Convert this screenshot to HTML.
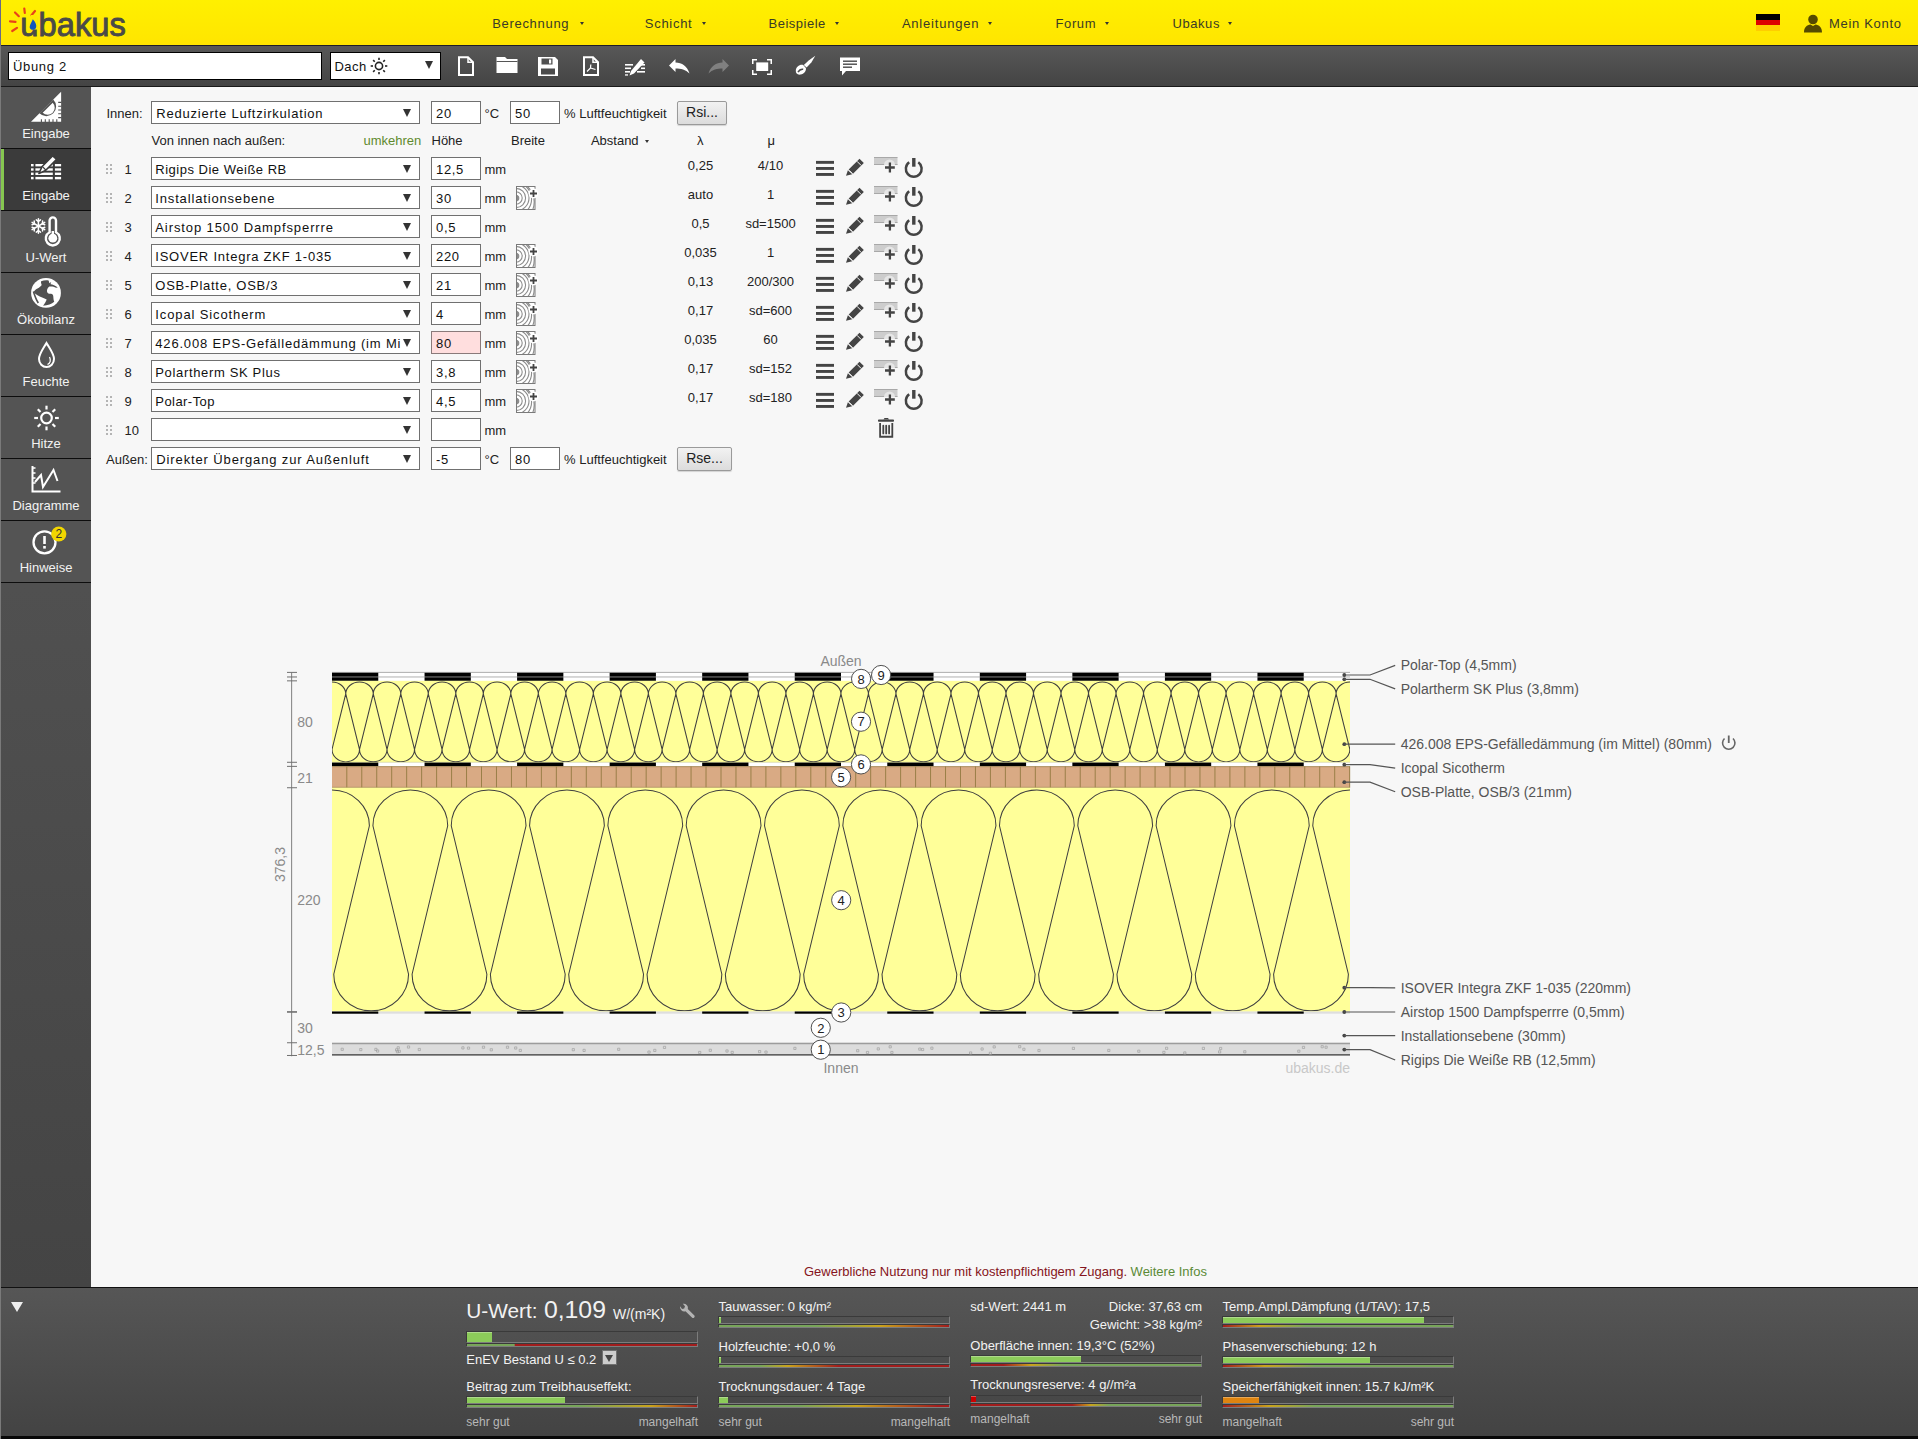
<!DOCTYPE html>
<html><head><meta charset="utf-8"><title>ubakus</title>
<style>
html,body{margin:0;padding:0}
body{width:1918px;height:1439px;overflow:hidden;position:relative;background:#f7f7f7;font-family:"Liberation Sans", sans-serif;color:#222}
.a{position:absolute}
.t{position:absolute;white-space:pre;line-height:1}
.v{letter-spacing:0.65px}
.sel{position:absolute;box-sizing:border-box;height:23px;border:1px solid #707070;background:#fff}
.inp{position:absolute;box-sizing:border-box;height:23px;border:1px solid #707070;background:#fff}
.arr{position:absolute;width:0;height:0;border-left:4px solid transparent;border-right:4px solid transparent;border-top:8px solid #333}
</style></head><body>

<div class="a" style="left:0;top:0;width:1918px;height:45px;background:linear-gradient(#fff000,#ffe500)"></div>
<div class="a" style="left:0;top:45px;width:1918px;height:1px;background:#1d1d28"></div>
<svg class="a" style="left:0;top:0" width="140" height="45" viewBox="0 0 140 45">
<g stroke="#e8421a" stroke-width="2.2" stroke-linecap="round">
<line x1="24.3" y1="8.5" x2="24.8" y2="13"/>
<line x1="15" y1="12.5" x2="18.8" y2="16.2"/>
<line x1="10" y1="21.4" x2="15.5" y2="21.8"/>
<line x1="12.2" y1="31" x2="17" y2="27.8"/>
<line x1="35" y1="11" x2="31.5" y2="15.3"/>
</g>
<text x="20.3" y="35.8" font-family="Liberation Sans" font-size="33.5" fill="#4a4a48" stroke="#4a4a48" stroke-width="0.9" textLength="105.5" lengthAdjust="spacingAndGlyphs">ubakus</text>
<rect x="30.8" y="15" width="6.5" height="14.5" fill="#ffe800"/>
<path d="M32.8 19.2 C35.8 22.5 36.8 25 36.1 27.5 C35.3 30.2 31.3 30.6 30 28.3 C29 26 31.2 23 32.8 19.2Z" fill="#1155bb"/>
</svg>
<div class="t" style="left:492.2px;top:17px;font-size:13px;color:#3a3a26;letter-spacing:0.695px">Berechnung</div>
<div class="a" style="left:579.8px;top:22px;width:0;height:0;border-left:2.5px solid transparent;border-right:2.5px solid transparent;border-top:3px solid #333"></div>
<div class="t" style="left:644.8px;top:17px;font-size:13px;color:#3a3a26;letter-spacing:0.710px">Schicht</div>
<div class="a" style="left:702px;top:22px;width:0;height:0;border-left:2.5px solid transparent;border-right:2.5px solid transparent;border-top:3px solid #333"></div>
<div class="t" style="left:768.6px;top:17px;font-size:13px;color:#3a3a26;letter-spacing:0.490px">Beispiele</div>
<div class="a" style="left:834.6px;top:22px;width:0;height:0;border-left:2.5px solid transparent;border-right:2.5px solid transparent;border-top:3px solid #333"></div>
<div class="t" style="left:901.9px;top:17px;font-size:13px;color:#3a3a26;letter-spacing:0.790px">Anleitungen</div>
<div class="a" style="left:987.5px;top:22px;width:0;height:0;border-left:2.5px solid transparent;border-right:2.5px solid transparent;border-top:3px solid #333"></div>
<div class="t" style="left:1055.5px;top:17px;font-size:13px;color:#3a3a26;letter-spacing:0.609px">Forum</div>
<div class="a" style="left:1104.5px;top:22px;width:0;height:0;border-left:2.5px solid transparent;border-right:2.5px solid transparent;border-top:3px solid #333"></div>
<div class="t" style="left:1172.5px;top:17px;font-size:13px;color:#3a3a26;letter-spacing:0.561px">Ubakus</div>
<div class="a" style="left:1228.4px;top:22px;width:0;height:0;border-left:2.5px solid transparent;border-right:2.5px solid transparent;border-top:3px solid #333"></div>
<div class="a" style="left:1756px;top:14px;width:24px;height:5.5px;background:#000"></div>
<div class="a" style="left:1756px;top:19.5px;width:24px;height:5.5px;background:#dd0000"></div>
<div class="a" style="left:1756px;top:25px;width:24px;height:5.5px;background:#ffce00"></div>
<svg class="a" style="left:1803px;top:14px" width="20" height="19" viewBox="0 0 20 19"><circle cx="10" cy="5.5" r="4.8" fill="#554a00"/><path d="M1 18.5 C1 13 4 11 7.5 10.5 L10 12 L12.5 10.5 C16 11 19 13 19 18.5Z" fill="#554a00"/></svg>
<div class="t" style="left:1829px;top:17px;font-size:13px;color:#3a3a26;letter-spacing:0.691px">Mein Konto</div>
<div class="a" style="left:0;top:46px;width:1918px;height:40px;background:linear-gradient(#585858,#444)"></div>
<div class="a" style="left:0;top:86px;width:1918px;height:1px;background:#1a1a1a"></div>
<div class="a" style="left:8px;top:52px;width:314px;height:28px;box-sizing:border-box;border:1px solid #000;background:#fff"></div>
<div class="t" style="left:13px;top:60px;font-size:13px;color:#111;letter-spacing:0.67px">Übung 2</div>
<div class="a" style="left:330px;top:52px;width:111px;height:28px;box-sizing:border-box;border:1px solid #000;background:#fff"></div>
<div class="t" style="left:334.5px;top:60px;font-size:13px;color:#111;letter-spacing:0.47px">Dach</div>
<div class="arr" style="left:425px;top:61px"></div>
<svg class="a" style="left:370px;top:57px" width="18" height="18" viewBox="0 0 18 18"><circle cx="9" cy="9" r="3.6" fill="none" stroke="#222" stroke-width="1.6"/><line x1="15.00" y1="9.00" x2="17.30" y2="9.00" stroke="#222" stroke-width="1.6"/><line x1="13.24" y1="13.24" x2="14.87" y2="14.87" stroke="#222" stroke-width="1.6"/><line x1="9.00" y1="15.00" x2="9.00" y2="17.30" stroke="#222" stroke-width="1.6"/><line x1="4.76" y1="13.24" x2="3.13" y2="14.87" stroke="#222" stroke-width="1.6"/><line x1="3.00" y1="9.00" x2="0.70" y2="9.00" stroke="#222" stroke-width="1.6"/><line x1="4.76" y1="4.76" x2="3.13" y2="3.13" stroke="#222" stroke-width="1.6"/><line x1="9.00" y1="3.00" x2="9.00" y2="0.70" stroke="#222" stroke-width="1.6"/><line x1="13.24" y1="4.76" x2="14.87" y2="3.13" stroke="#222" stroke-width="1.6"/></svg>
<svg class="a" style="left:0;top:46px" width="880" height="40" viewBox="0 46 880 40">
<g fill="none" stroke="#fff" stroke-width="2">
<path d="M459 57.2 H468 L473 62.2 V75 H459 Z"/>
<path d="M468 57.2 V62.2 H473" stroke-width="1.5"/>
</g>
<path d="M496.5 57 H505 L507 59 H517.5 V73 H496.5 Z" fill="#fff"/>
<path d="M496.5 61.5 H517.5" stroke="#555" stroke-width="1"/>
<path d="M538 57 H555 L558 60 V76 H538 Z" fill="#fff"/>
<rect x="541.5" y="58.5" width="11" height="6" fill="#505050"/>
<rect x="549" y="59.5" width="2.2" height="4" fill="#fff"/>
<rect x="541" y="68.5" width="14" height="6" fill="#4a4a4a"/>
<g fill="none" stroke="#fff" stroke-width="2">
<path d="M584 57.2 H593 L598 62.2 V75 H584 Z"/>
<path d="M593 57.2 V62.2 H598" stroke-width="1.5"/>
</g>
<path d="M587 71.5 L590.5 68 L590.8 64.5 M590.5 68 L595.5 69.5" stroke="#fff" stroke-width="1.2" fill="none"/>
<g fill="#fff">
<rect x="625" y="64" width="8" height="1.6"/><rect x="625" y="67.5" width="6" height="1.6"/><rect x="625" y="71" width="5" height="1.6"/><rect x="625" y="74.3" width="3" height="1.3"/>
<rect x="639" y="64" width="6" height="1.6"/><rect x="641" y="67.5" width="4" height="1.6"/><rect x="637" y="71" width="8" height="1.6"/>
<path d="M641 59 L644.5 62.5 L634 73.5 L629.5 75.5 L631 71 Z"/>
<path d="M669 65.5 L675.5 59 L675.5 62.5 C682 62.5 687 66 689.5 73.5 C685.5 69.5 681 68.5 675.5 68.5 L675.5 72 Z"/>
<path d="M729 65.5 L722.5 59 L722.5 62.5 C716 62.5 711 66 708.5 73.5 C712.5 69.5 717 68.5 722.5 68.5 L722.5 72 Z" fill="#808080"/>
<rect x="756.2" y="62.4" width="12" height="8.6"/>
<path d="M752 59 H757 V60.5 H753.5 V64 H752 Z M772 59 H767 V60.5 H770.5 V64 H772 Z M752 75 H757 V73.5 H753.5 V70 H752 Z M772 75 H767 V73.5 H770.5 V70 H772 Z"/>
<path d="M815.3 55.8 L811.5 62.3 L806.6 67.6 L803.8 65 L809 60.2 Z"/>
<path d="M803.2 65 C799.5 64.2 796 67 795.8 70.6 C795.6 73.6 797.6 75.2 800.6 74.6 C804 73.9 806.4 71 805.9 67.9 Z"/>
<path d="M840 57.5 H860 V71 H846 L842 75.5 V71 H840 Z"/>
</g>
<g fill="#4a4a4a"><rect x="843" y="60.5" width="14" height="1.4"/><rect x="843" y="63.5" width="14" height="1.4"/><rect x="843" y="66.5" width="9" height="1.4"/></g>
<path d="M798 72.2 C799.2 70 801.2 68.9 803.2 69.2" stroke="#4c4c4c" stroke-width="1.5" fill="none"/>
</svg>
<div class="a" style="left:0;top:87px;width:91px;height:1200px;background:linear-gradient(#545454 0px,#505050 500px,#444 1200px)"></div>
<div class="a" style="left:1px;top:87px;width:90px;height:61px;background:#545454"></div>
<div class="a" style="left:1px;top:148px;width:90px;height:1.3px;background:#0d0d0d"></div>
<div class="t" style="left:1px;width:90px;text-align:center;top:126.6px;font-size:13px;color:#f2f2f2">Eingabe</div>
<div class="a" style="left:1px;top:149px;width:90px;height:61px;background:#3b3b3b"></div>
<div class="a" style="left:1px;top:210px;width:90px;height:1.3px;background:#0d0d0d"></div>
<div class="t" style="left:1px;width:90px;text-align:center;top:188.6px;font-size:13px;color:#f2f2f2">Eingabe</div>
<div class="a" style="left:1px;top:211px;width:90px;height:61px;background:#545454"></div>
<div class="a" style="left:1px;top:272px;width:90px;height:1.3px;background:#0d0d0d"></div>
<div class="t" style="left:1px;width:90px;text-align:center;top:250.6px;font-size:13px;color:#f2f2f2">U-Wert</div>
<div class="a" style="left:1px;top:273px;width:90px;height:61px;background:#545454"></div>
<div class="a" style="left:1px;top:334px;width:90px;height:1.3px;background:#0d0d0d"></div>
<div class="t" style="left:1px;width:90px;text-align:center;top:312.6px;font-size:13px;color:#f2f2f2">Ökobilanz</div>
<div class="a" style="left:1px;top:335px;width:90px;height:61px;background:#545454"></div>
<div class="a" style="left:1px;top:396px;width:90px;height:1.3px;background:#0d0d0d"></div>
<div class="t" style="left:1px;width:90px;text-align:center;top:374.6px;font-size:13px;color:#f2f2f2">Feuchte</div>
<div class="a" style="left:1px;top:397px;width:90px;height:61px;background:#545454"></div>
<div class="a" style="left:1px;top:458px;width:90px;height:1.3px;background:#0d0d0d"></div>
<div class="t" style="left:1px;width:90px;text-align:center;top:436.6px;font-size:13px;color:#f2f2f2">Hitze</div>
<div class="a" style="left:1px;top:459px;width:90px;height:61px;background:#545454"></div>
<div class="a" style="left:1px;top:520px;width:90px;height:1.3px;background:#0d0d0d"></div>
<div class="t" style="left:1px;width:90px;text-align:center;top:498.6px;font-size:13px;color:#f2f2f2">Diagramme</div>
<div class="a" style="left:1px;top:521px;width:90px;height:61px;background:#545454"></div>
<div class="a" style="left:1px;top:582px;width:90px;height:1.3px;background:#0d0d0d"></div>
<div class="t" style="left:1px;width:90px;text-align:center;top:560.6px;font-size:13px;color:#f2f2f2">Hinweise</div>
<div class="a" style="left:1px;top:149px;width:3px;height:61px;background:#86c651"></div>
<svg class="a" style="left:0;top:87px" width="91" height="500" viewBox="0 87 91 500">
<path d="M31 121.7 L61.1 91.7 V121.7 Z" fill="#fff"/>
<path d="M39.37 113.33 A9.8 9.8 0 0 0 53.23 99.47 Z" fill="#525252"/>
<path d="M42.69 112.83 A7.10 7.10 0 0 0 52.73 102.79 Z" fill="#fff"/>
<path d="M58.2 102.4 H61.5 M58.2 106.2 H61.5 M58.2 110 H61.5 M58.2 113.8 H61.5 M58.2 117.6 H61.5 M41.4 119.2 V122 M45.3 119.2 V122 M49.2 119.2 V122 M53 119.2 V122 M56.8 119.2 V122" stroke="#525252" stroke-width="1.1"/>
<g fill="#fff">
<rect x="31" y="164" width="2.6" height="2.4"/><rect x="35.4" y="164" width="17.4" height="2.4"/><rect x="54.9" y="164" width="6.2" height="2.4"/>
<rect x="31" y="168.3" width="2.6" height="2.4"/><rect x="35.4" y="168.3" width="17.4" height="2.4"/><rect x="54.9" y="168.3" width="6.2" height="2.4"/>
<rect x="31" y="172.6" width="2.6" height="2.4"/><rect x="35.4" y="172.6" width="17.4" height="2.4"/><rect x="54.9" y="172.6" width="6.2" height="2.4"/>
<rect x="31" y="176.9" width="2.6" height="2.4"/><rect x="35.4" y="176.9" width="17.4" height="2.4"/><rect x="54.9" y="176.9" width="6.2" height="2.4"/>
</g>
<path d="M52.8 155.8 L56.6 159.4 L45.5 170.5 L38.9 173.5 L41.9 166.8 Z" fill="#fff" stroke="#3b3b3b" stroke-width="1.6" stroke-linejoin="round"/>
<path d="M42.2 166.4 L45.8 170" stroke="#3b3b3b" stroke-width="1.2"/>
</svg>
<svg class="a" style="left:0;top:211px" width="91" height="62" viewBox="0 0 91 62"><g stroke="#fff" stroke-width="1.5" stroke-linecap="round" fill="none"><line x1="38.4" y1="15" x2="38.40" y2="7.70"/><line x1="38.40" y1="10.40" x2="36.27" y2="8.91"/><line x1="38.40" y1="10.40" x2="40.53" y2="8.91"/><line x1="38.4" y1="15" x2="32.08" y2="11.35"/><line x1="34.42" y1="12.70" x2="32.06" y2="13.80"/><line x1="34.42" y1="12.70" x2="34.19" y2="10.11"/><line x1="38.4" y1="15" x2="32.08" y2="18.65"/><line x1="34.42" y1="17.30" x2="34.19" y2="19.89"/><line x1="34.42" y1="17.30" x2="32.06" y2="16.20"/><line x1="38.4" y1="15" x2="38.40" y2="22.30"/><line x1="38.40" y1="19.60" x2="40.53" y2="21.09"/><line x1="38.40" y1="19.60" x2="36.27" y2="21.09"/><line x1="38.4" y1="15" x2="44.72" y2="18.65"/><line x1="42.38" y1="17.30" x2="44.74" y2="16.20"/><line x1="42.38" y1="17.30" x2="42.61" y2="19.89"/><line x1="38.4" y1="15" x2="44.72" y2="11.35"/><line x1="42.38" y1="12.70" x2="42.61" y2="10.11"/><line x1="42.38" y1="12.70" x2="44.74" y2="13.80"/></g><path d="M49.6 9.6 A3.2 3.2 0 0 1 56 9.6 V21.2 A7 7 0 1 1 49.6 21.2 Z" fill="none" stroke="#fff" stroke-width="2.4"/><circle cx="52.8" cy="27.2" r="4.4" fill="#fff"/><rect x="51.6" y="20" width="2.4" height="6" fill="#fff"/></svg>
<svg class="a" style="left:0;top:0" width="91" height="340" viewBox="0 0 91 340">
<circle cx="46" cy="292.9" r="14.9" fill="#fff"/>
<path d="M41.1 281.3 C43.5 280.2 46.5 280 48.6 280.5 L49.4 283.2 L51.2 282 L50.5 284.2 C52.5 284.5 55.5 285.5 57.8 287.4 L56 287.8 C54 286.6 51.8 286.4 49.4 286.6 C48 287.5 47.2 289 47 290.5 C46.8 292 47.5 293.4 49 293.8 C51 293.6 52.5 294 53 295 C53.6 297 53.2 299.5 54.2 301.8 C52 304 47.5 305.6 43.1 305.8 C44.5 303.8 46 301.5 46.7 299.4 C44 298 40.5 296.8 37.5 295.2 C35.8 294.2 34.5 293 33.6 291.9 C34.8 290.2 36.2 289.4 37.5 288.6 C39.5 287.5 40.8 286 41.7 284.9 C41.2 283.8 40.8 282.5 41.1 281.3 Z" fill="#505050"/>
<path d="M33.4 291.5 C34.5 295 36 299.5 38.3 303" fill="none" stroke="#505050" stroke-width="1.6"/>
</svg>
<svg class="a" style="left:0;top:335px" width="91" height="62" viewBox="0 0 91 62">
<path d="M46.5 8 C43 14 39 19 39 24 C39 28.5 42.5 32 46.5 32 C50.5 32 54 28.5 54 24 C54 19 50 14 46.5 8Z" fill="none" stroke="#fff" stroke-width="2"/>
<path d="M49.5 22 C51 25 50.5 28 47.5 29.5" fill="none" stroke="#fff" stroke-width="1.3"/>
</svg>
<svg class="a" style="left:0;top:397px" width="91" height="62" viewBox="0 0 91 62"><circle cx="46.5" cy="21" r="5.3" fill="none" stroke="#fff" stroke-width="2.2"/><line x1="55.00" y1="21.00" x2="58.80" y2="21.00" stroke="#fff" stroke-width="2.2"/><line x1="52.51" y1="27.01" x2="55.20" y2="29.70" stroke="#fff" stroke-width="2.2"/><line x1="46.50" y1="29.50" x2="46.50" y2="33.30" stroke="#fff" stroke-width="2.2"/><line x1="40.49" y1="27.01" x2="37.80" y2="29.70" stroke="#fff" stroke-width="2.2"/><line x1="38.00" y1="21.00" x2="34.20" y2="21.00" stroke="#fff" stroke-width="2.2"/><line x1="40.49" y1="14.99" x2="37.80" y2="12.30" stroke="#fff" stroke-width="2.2"/><line x1="46.50" y1="12.50" x2="46.50" y2="8.70" stroke="#fff" stroke-width="2.2"/><line x1="52.51" y1="14.99" x2="55.20" y2="12.30" stroke="#fff" stroke-width="2.2"/></svg>
<svg class="a" style="left:0;top:459px" width="91" height="62" viewBox="0 0 91 62">
<path d="M32.5 7 V32.5 H60.5" fill="none" stroke="#fff" stroke-width="2"/>
<path d="M32.5 9 H35.5 M32.5 14 H35.5 M32.5 19 H35.5 M32.5 24 H35.5" stroke="#fff" stroke-width="1.3"/>
<path d="M35 23 L41 16 L43 28 L53.5 11 L57.5 22" fill="none" stroke="#fff" stroke-width="2"/>
</svg>
<svg class="a" style="left:0;top:521px" width="91" height="62" viewBox="0 0 91 62">
<circle cx="44.5" cy="21.3" r="11" fill="none" stroke="#fff" stroke-width="2.3"/>
<rect x="43.2" y="15" width="2.6" height="8" fill="#fff"/><rect x="43.2" y="25" width="2.6" height="2.6" fill="#fff"/>
<circle cx="58.8" cy="13" r="7.6" fill="#f2d600"/>
<text x="58.8" y="17.2" font-family="Liberation Sans" font-size="12" text-anchor="middle" fill="#333">2</text>
</svg>
<div class="t" style="left:106.50px;top:106.70px;font-size:13px;color:#222;">Innen:</div>
<div class="sel" style="left:151px;top:101px;width:269px;"></div>
<div class="t" style="left:156.30px;top:106.75px;font-size:13px;color:#111;letter-spacing:0.783px;">Reduzierte Luftzirkulation</div>
<div class="arr" style="left:403px;top:108.5px"></div>
<div class="inp" style="left:431px;top:101px;width:50px;background:#fff;border-color:#707070"></div>
<div class="t" style="left:436.00px;top:106.75px;font-size:13px;color:#111;letter-spacing:0.68px;">20</div>
<div class="t" style="left:484.50px;top:106.70px;font-size:13px;color:#222;">°C</div>
<div class="inp" style="left:510px;top:101px;width:50px;background:#fff;border-color:#707070"></div>
<div class="t" style="left:515.00px;top:106.75px;font-size:13px;color:#111;letter-spacing:0.68px;">50</div>
<div class="t" style="left:564.00px;top:106.70px;font-size:13px;color:#222;">% Luftfeuchtigkeit</div>
<div class="a" style="left:677px;top:101px;width:50px;height:24px;box-sizing:border-box;border:1px solid #9a9a9a;border-radius:2px;background:linear-gradient(#f2f2f2,#dcdcdc);box-shadow:0 1px 1px rgba(0,0,0,0.15)"></div>
<div class="t" style="left:677px;top:105.00px;width:50px;text-align:center;font-size:14px;line-height:14px;color:#222">Rsi...</div>
<div class="t" style="left:151.50px;top:134.00px;font-size:13px;color:#222;">Von innen nach außen:</div>
<div class="t" style="left:363.50px;top:134.00px;font-size:13px;color:#5f8a2e;">umkehren</div>
<div class="t" style="left:431.50px;top:134.00px;font-size:13px;color:#222;">Höhe</div>
<div class="t" style="left:511.00px;top:134.00px;font-size:13px;color:#222;">Breite</div>
<div class="t" style="left:590.90px;top:134.00px;font-size:13px;color:#222;">Abstand</div>
<div class="a" style="left:644.5px;top:139.5px;width:0;height:0;border-left:2.5px solid transparent;border-right:2.5px solid transparent;border-top:3px solid #333"></div>
<div class="t" style="left:697.00px;top:134.00px;font-size:13px;color:#222;">λ</div>
<div class="t" style="left:767.50px;top:134.00px;font-size:13px;color:#222;">μ</div>
<div class="a" style="left:106px;top:164px;width:2px;height:2px;background:#b4b4b4"></div>
<div class="a" style="left:106px;top:168px;width:2px;height:2px;background:#b4b4b4"></div>
<div class="a" style="left:106px;top:172px;width:2px;height:2px;background:#b4b4b4"></div>
<div class="a" style="left:110px;top:164px;width:2px;height:2px;background:#b4b4b4"></div>
<div class="a" style="left:110px;top:168px;width:2px;height:2px;background:#b4b4b4"></div>
<div class="a" style="left:110px;top:172px;width:2px;height:2px;background:#b4b4b4"></div>
<div class="t" style="left:124.50px;top:162.75px;font-size:13px;color:#222;">1</div>
<div class="sel" style="left:151px;top:157px;width:269px;"></div>
<div class="t" style="left:155.30px;top:162.75px;font-size:13px;color:#111;letter-spacing:0.507px;">Rigips Die Weiße RB</div>
<div class="arr" style="left:403px;top:164.5px"></div>
<div class="inp" style="left:431px;top:157px;width:50px;background:#fff;border-color:#707070"></div>
<div class="t" style="left:436.00px;top:162.75px;font-size:13px;color:#111;letter-spacing:0.68px;">12,5</div>
<div class="t" style="left:484.50px;top:162.75px;font-size:13px;color:#222;">mm</div>
<div class="t" style="left:650px;width:101px;text-align:center;top:159.20px;font-size:13px;color:#222">0,25</div>
<div class="t" style="left:720px;width:101px;text-align:center;top:159.20px;font-size:13px;color:#222">4/10</div>
<div class="a" style="left:106px;top:193px;width:2px;height:2px;background:#b4b4b4"></div>
<div class="a" style="left:106px;top:197px;width:2px;height:2px;background:#b4b4b4"></div>
<div class="a" style="left:106px;top:201px;width:2px;height:2px;background:#b4b4b4"></div>
<div class="a" style="left:110px;top:193px;width:2px;height:2px;background:#b4b4b4"></div>
<div class="a" style="left:110px;top:197px;width:2px;height:2px;background:#b4b4b4"></div>
<div class="a" style="left:110px;top:201px;width:2px;height:2px;background:#b4b4b4"></div>
<div class="t" style="left:124.50px;top:191.75px;font-size:13px;color:#222;">2</div>
<div class="sel" style="left:151px;top:186px;width:269px;"></div>
<div class="t" style="left:155.30px;top:191.75px;font-size:13px;color:#111;letter-spacing:0.839px;">Installationsebene</div>
<div class="arr" style="left:403px;top:193.5px"></div>
<div class="inp" style="left:431px;top:186px;width:50px;background:#fff;border-color:#707070"></div>
<div class="t" style="left:436.00px;top:191.75px;font-size:13px;color:#111;letter-spacing:0.68px;">30</div>
<div class="t" style="left:484.50px;top:191.75px;font-size:13px;color:#222;">mm</div>
<div class="t" style="left:650px;width:101px;text-align:center;top:188.20px;font-size:13px;color:#222">auto</div>
<div class="t" style="left:720px;width:101px;text-align:center;top:188.20px;font-size:13px;color:#222">1</div>
<div class="a" style="left:106px;top:222px;width:2px;height:2px;background:#b4b4b4"></div>
<div class="a" style="left:106px;top:226px;width:2px;height:2px;background:#b4b4b4"></div>
<div class="a" style="left:106px;top:230px;width:2px;height:2px;background:#b4b4b4"></div>
<div class="a" style="left:110px;top:222px;width:2px;height:2px;background:#b4b4b4"></div>
<div class="a" style="left:110px;top:226px;width:2px;height:2px;background:#b4b4b4"></div>
<div class="a" style="left:110px;top:230px;width:2px;height:2px;background:#b4b4b4"></div>
<div class="t" style="left:124.50px;top:220.75px;font-size:13px;color:#222;">3</div>
<div class="sel" style="left:151px;top:215px;width:269px;"></div>
<div class="t" style="left:155.30px;top:220.75px;font-size:13px;color:#111;letter-spacing:0.904px;">Airstop 1500 Dampfsperrre</div>
<div class="arr" style="left:403px;top:222.5px"></div>
<div class="inp" style="left:431px;top:215px;width:50px;background:#fff;border-color:#707070"></div>
<div class="t" style="left:436.00px;top:220.75px;font-size:13px;color:#111;letter-spacing:0.68px;">0,5</div>
<div class="t" style="left:484.50px;top:220.75px;font-size:13px;color:#222;">mm</div>
<div class="t" style="left:650px;width:101px;text-align:center;top:217.20px;font-size:13px;color:#222">0,5</div>
<div class="t" style="left:720px;width:101px;text-align:center;top:217.20px;font-size:13px;color:#222">sd=1500</div>
<div class="a" style="left:106px;top:251px;width:2px;height:2px;background:#b4b4b4"></div>
<div class="a" style="left:106px;top:255px;width:2px;height:2px;background:#b4b4b4"></div>
<div class="a" style="left:106px;top:259px;width:2px;height:2px;background:#b4b4b4"></div>
<div class="a" style="left:110px;top:251px;width:2px;height:2px;background:#b4b4b4"></div>
<div class="a" style="left:110px;top:255px;width:2px;height:2px;background:#b4b4b4"></div>
<div class="a" style="left:110px;top:259px;width:2px;height:2px;background:#b4b4b4"></div>
<div class="t" style="left:124.50px;top:249.75px;font-size:13px;color:#222;">4</div>
<div class="sel" style="left:151px;top:244px;width:269px;"></div>
<div class="t" style="left:155.30px;top:249.75px;font-size:13px;color:#111;letter-spacing:0.767px;">ISOVER Integra ZKF 1-035</div>
<div class="arr" style="left:403px;top:251.5px"></div>
<div class="inp" style="left:431px;top:244px;width:50px;background:#fff;border-color:#707070"></div>
<div class="t" style="left:436.00px;top:249.75px;font-size:13px;color:#111;letter-spacing:0.68px;">220</div>
<div class="t" style="left:484.50px;top:249.75px;font-size:13px;color:#222;">mm</div>
<div class="t" style="left:650px;width:101px;text-align:center;top:246.20px;font-size:13px;color:#222">0,035</div>
<div class="t" style="left:720px;width:101px;text-align:center;top:246.20px;font-size:13px;color:#222">1</div>
<div class="a" style="left:106px;top:280px;width:2px;height:2px;background:#b4b4b4"></div>
<div class="a" style="left:106px;top:284px;width:2px;height:2px;background:#b4b4b4"></div>
<div class="a" style="left:106px;top:288px;width:2px;height:2px;background:#b4b4b4"></div>
<div class="a" style="left:110px;top:280px;width:2px;height:2px;background:#b4b4b4"></div>
<div class="a" style="left:110px;top:284px;width:2px;height:2px;background:#b4b4b4"></div>
<div class="a" style="left:110px;top:288px;width:2px;height:2px;background:#b4b4b4"></div>
<div class="t" style="left:124.50px;top:278.75px;font-size:13px;color:#222;">5</div>
<div class="sel" style="left:151px;top:273px;width:269px;"></div>
<div class="t" style="left:155.30px;top:278.75px;font-size:13px;color:#111;letter-spacing:0.735px;">OSB-Platte, OSB/3</div>
<div class="arr" style="left:403px;top:280.5px"></div>
<div class="inp" style="left:431px;top:273px;width:50px;background:#fff;border-color:#707070"></div>
<div class="t" style="left:436.00px;top:278.75px;font-size:13px;color:#111;letter-spacing:0.68px;">21</div>
<div class="t" style="left:484.50px;top:278.75px;font-size:13px;color:#222;">mm</div>
<div class="t" style="left:650px;width:101px;text-align:center;top:275.20px;font-size:13px;color:#222">0,13</div>
<div class="t" style="left:720px;width:101px;text-align:center;top:275.20px;font-size:13px;color:#222">200/300</div>
<div class="a" style="left:106px;top:309px;width:2px;height:2px;background:#b4b4b4"></div>
<div class="a" style="left:106px;top:313px;width:2px;height:2px;background:#b4b4b4"></div>
<div class="a" style="left:106px;top:317px;width:2px;height:2px;background:#b4b4b4"></div>
<div class="a" style="left:110px;top:309px;width:2px;height:2px;background:#b4b4b4"></div>
<div class="a" style="left:110px;top:313px;width:2px;height:2px;background:#b4b4b4"></div>
<div class="a" style="left:110px;top:317px;width:2px;height:2px;background:#b4b4b4"></div>
<div class="t" style="left:124.50px;top:307.75px;font-size:13px;color:#222;">6</div>
<div class="sel" style="left:151px;top:302px;width:269px;"></div>
<div class="t" style="left:155.30px;top:307.75px;font-size:13px;color:#111;letter-spacing:0.884px;">Icopal Sicotherm</div>
<div class="arr" style="left:403px;top:309.5px"></div>
<div class="inp" style="left:431px;top:302px;width:50px;background:#fff;border-color:#707070"></div>
<div class="t" style="left:436.00px;top:307.75px;font-size:13px;color:#111;letter-spacing:0.68px;">4</div>
<div class="t" style="left:484.50px;top:307.75px;font-size:13px;color:#222;">mm</div>
<div class="t" style="left:650px;width:101px;text-align:center;top:304.20px;font-size:13px;color:#222">0,17</div>
<div class="t" style="left:720px;width:101px;text-align:center;top:304.20px;font-size:13px;color:#222">sd=600</div>
<div class="a" style="left:106px;top:338px;width:2px;height:2px;background:#b4b4b4"></div>
<div class="a" style="left:106px;top:342px;width:2px;height:2px;background:#b4b4b4"></div>
<div class="a" style="left:106px;top:346px;width:2px;height:2px;background:#b4b4b4"></div>
<div class="a" style="left:110px;top:338px;width:2px;height:2px;background:#b4b4b4"></div>
<div class="a" style="left:110px;top:342px;width:2px;height:2px;background:#b4b4b4"></div>
<div class="a" style="left:110px;top:346px;width:2px;height:2px;background:#b4b4b4"></div>
<div class="t" style="left:124.50px;top:336.75px;font-size:13px;color:#222;">7</div>
<div class="sel" style="left:151px;top:331px;width:269px;"></div>
<div class="t" style="left:155.30px;top:336.75px;font-size:13px;color:#111;letter-spacing:0.819px;width:250px;overflow:hidden;padding:3px 0 4px 0;margin-top:-3px;">426.008 EPS-Gefälledämmung (im Mi</div>
<div class="arr" style="left:403px;top:338.5px"></div>
<div class="inp" style="left:431px;top:331px;width:50px;background:#ffdede;border-color:#8a7a7a"></div>
<div class="t" style="left:436.00px;top:336.75px;font-size:13px;color:#111;letter-spacing:0.68px;">80</div>
<div class="t" style="left:484.50px;top:336.75px;font-size:13px;color:#222;">mm</div>
<div class="t" style="left:650px;width:101px;text-align:center;top:333.20px;font-size:13px;color:#222">0,035</div>
<div class="t" style="left:720px;width:101px;text-align:center;top:333.20px;font-size:13px;color:#222">60</div>
<div class="a" style="left:106px;top:367px;width:2px;height:2px;background:#b4b4b4"></div>
<div class="a" style="left:106px;top:371px;width:2px;height:2px;background:#b4b4b4"></div>
<div class="a" style="left:106px;top:375px;width:2px;height:2px;background:#b4b4b4"></div>
<div class="a" style="left:110px;top:367px;width:2px;height:2px;background:#b4b4b4"></div>
<div class="a" style="left:110px;top:371px;width:2px;height:2px;background:#b4b4b4"></div>
<div class="a" style="left:110px;top:375px;width:2px;height:2px;background:#b4b4b4"></div>
<div class="t" style="left:124.50px;top:365.75px;font-size:13px;color:#222;">8</div>
<div class="sel" style="left:151px;top:360px;width:269px;"></div>
<div class="t" style="left:155.30px;top:365.75px;font-size:13px;color:#111;letter-spacing:0.656px;">Polartherm SK Plus</div>
<div class="arr" style="left:403px;top:367.5px"></div>
<div class="inp" style="left:431px;top:360px;width:50px;background:#fff;border-color:#707070"></div>
<div class="t" style="left:436.00px;top:365.75px;font-size:13px;color:#111;letter-spacing:0.68px;">3,8</div>
<div class="t" style="left:484.50px;top:365.75px;font-size:13px;color:#222;">mm</div>
<div class="t" style="left:650px;width:101px;text-align:center;top:362.20px;font-size:13px;color:#222">0,17</div>
<div class="t" style="left:720px;width:101px;text-align:center;top:362.20px;font-size:13px;color:#222">sd=152</div>
<div class="a" style="left:106px;top:396px;width:2px;height:2px;background:#b4b4b4"></div>
<div class="a" style="left:106px;top:400px;width:2px;height:2px;background:#b4b4b4"></div>
<div class="a" style="left:106px;top:404px;width:2px;height:2px;background:#b4b4b4"></div>
<div class="a" style="left:110px;top:396px;width:2px;height:2px;background:#b4b4b4"></div>
<div class="a" style="left:110px;top:400px;width:2px;height:2px;background:#b4b4b4"></div>
<div class="a" style="left:110px;top:404px;width:2px;height:2px;background:#b4b4b4"></div>
<div class="t" style="left:124.50px;top:394.75px;font-size:13px;color:#222;">9</div>
<div class="sel" style="left:151px;top:389px;width:269px;"></div>
<div class="t" style="left:155.30px;top:394.75px;font-size:13px;color:#111;letter-spacing:0.443px;">Polar-Top</div>
<div class="arr" style="left:403px;top:396.5px"></div>
<div class="inp" style="left:431px;top:389px;width:50px;background:#fff;border-color:#707070"></div>
<div class="t" style="left:436.00px;top:394.75px;font-size:13px;color:#111;letter-spacing:0.68px;">4,5</div>
<div class="t" style="left:484.50px;top:394.75px;font-size:13px;color:#222;">mm</div>
<div class="t" style="left:650px;width:101px;text-align:center;top:391.20px;font-size:13px;color:#222">0,17</div>
<div class="t" style="left:720px;width:101px;text-align:center;top:391.20px;font-size:13px;color:#222">sd=180</div>
<div class="a" style="left:106px;top:425px;width:2px;height:2px;background:#b4b4b4"></div>
<div class="a" style="left:106px;top:429px;width:2px;height:2px;background:#b4b4b4"></div>
<div class="a" style="left:106px;top:433px;width:2px;height:2px;background:#b4b4b4"></div>
<div class="a" style="left:110px;top:425px;width:2px;height:2px;background:#b4b4b4"></div>
<div class="a" style="left:110px;top:429px;width:2px;height:2px;background:#b4b4b4"></div>
<div class="a" style="left:110px;top:433px;width:2px;height:2px;background:#b4b4b4"></div>
<div class="t" style="left:124.50px;top:423.75px;font-size:13px;color:#222;">10</div>
<div class="sel" style="left:151px;top:418px;width:269px;"></div>
<div class="t" style="left:155.30px;top:423.75px;font-size:13px;color:#111;letter-spacing:0.680px;"></div>
<div class="arr" style="left:403px;top:425.5px"></div>
<div class="inp" style="left:431px;top:418px;width:50px;background:#fff;border-color:#707070"></div>
<div class="t" style="left:436.00px;top:423.75px;font-size:13px;color:#111;letter-spacing:0.68px;"></div>
<div class="t" style="left:484.50px;top:423.75px;font-size:13px;color:#222;">mm</div>
<svg class="a" style="left:0;top:0" width="940" height="480" viewBox="0 0 940 480"><defs><clipPath id="tclip"><rect x="0.5" y="0.5" width="18.5" height="23"/></clipPath></defs><g transform="translate(0,0)">
<rect x="816" y="160.9" width="18" height="2.9" fill="#444"/><rect x="816" y="167" width="18" height="2.9" fill="#444"/><rect x="816" y="173" width="18" height="2.9" fill="#444"/>
<path d="M846 175.8 L847.9 170.3 L852.3 174.3 Z" fill="#444"/>
<path d="M848.7 169.5 L859.5 158.7 L863.8 162.9 L853 173.7 Z" fill="#444"/>
<path d="M858.2 160 L849.6 168.6" stroke="#f7f7f7" stroke-width="0"/>
<path d="M857 161.3 L861.2 165.5" stroke="#f7f7f7" stroke-width="1"/>
<path d="M849.3 170.5 L852.3 173.5" stroke="#f7f7f7" stroke-width="0.9"/>
<rect x="874" y="157.3" width="23.5" height="7.6" fill="#cdcdcd"/>
<rect x="874" y="157" width="23.5" height="1" fill="#a8a8a8"/><rect x="874" y="164" width="23.5" height="1" fill="#a8a8a8"/>
<path d="M884 164.9 A5.5 5.5 0 0 1 895 164.9 Z" fill="#e6e6e6"/>
<path d="M885 167.5 H894.8 M889.9 162.5 V172.5" stroke="#444" stroke-width="2.3"/>
<path d="M909.22 162.33 A7.9 7.9 0 1 0 918.28 162.33" fill="none" stroke="#444" stroke-width="2.5"/>
<rect x="912.1" y="158" width="3.4" height="8.7" fill="#444"/>
</g>
<g transform="translate(516,186)">
<rect x="0.5" y="0.5" width="18.5" height="23" fill="#fff"/>
<g clip-path="url(#tclip)" fill="none" stroke="#8c8c8c" stroke-width="1.1">
<circle cx="0" cy="12" r="2.8" fill="#8c8c8c"/><circle cx="0" cy="12" r="6.2"/><circle cx="0" cy="12" r="9.6"/><circle cx="0" cy="12" r="13"/><circle cx="-1" cy="13" r="16.6"/><circle cx="-3" cy="16" r="21.2"/>
</g>
<rect x="0.5" y="0.5" width="18.5" height="23" fill="none" stroke="#7a7a7a" stroke-width="1"/>
<circle cx="17.5" cy="7.5" r="5" fill="#fff"/>
<path d="M14 7.5 H21 M17.5 4 V11" stroke="#444" stroke-width="1.8"/>
</g>
<g transform="translate(0,29)">
<rect x="816" y="160.9" width="18" height="2.9" fill="#444"/><rect x="816" y="167" width="18" height="2.9" fill="#444"/><rect x="816" y="173" width="18" height="2.9" fill="#444"/>
<path d="M846 175.8 L847.9 170.3 L852.3 174.3 Z" fill="#444"/>
<path d="M848.7 169.5 L859.5 158.7 L863.8 162.9 L853 173.7 Z" fill="#444"/>
<path d="M858.2 160 L849.6 168.6" stroke="#f7f7f7" stroke-width="0"/>
<path d="M857 161.3 L861.2 165.5" stroke="#f7f7f7" stroke-width="1"/>
<path d="M849.3 170.5 L852.3 173.5" stroke="#f7f7f7" stroke-width="0.9"/>
<rect x="874" y="157.3" width="23.5" height="7.6" fill="#cdcdcd"/>
<rect x="874" y="157" width="23.5" height="1" fill="#a8a8a8"/><rect x="874" y="164" width="23.5" height="1" fill="#a8a8a8"/>
<path d="M884 164.9 A5.5 5.5 0 0 1 895 164.9 Z" fill="#e6e6e6"/>
<path d="M885 167.5 H894.8 M889.9 162.5 V172.5" stroke="#444" stroke-width="2.3"/>
<path d="M909.22 162.33 A7.9 7.9 0 1 0 918.28 162.33" fill="none" stroke="#444" stroke-width="2.5"/>
<rect x="912.1" y="158" width="3.4" height="8.7" fill="#444"/>
</g>
<g transform="translate(0,58)">
<rect x="816" y="160.9" width="18" height="2.9" fill="#444"/><rect x="816" y="167" width="18" height="2.9" fill="#444"/><rect x="816" y="173" width="18" height="2.9" fill="#444"/>
<path d="M846 175.8 L847.9 170.3 L852.3 174.3 Z" fill="#444"/>
<path d="M848.7 169.5 L859.5 158.7 L863.8 162.9 L853 173.7 Z" fill="#444"/>
<path d="M858.2 160 L849.6 168.6" stroke="#f7f7f7" stroke-width="0"/>
<path d="M857 161.3 L861.2 165.5" stroke="#f7f7f7" stroke-width="1"/>
<path d="M849.3 170.5 L852.3 173.5" stroke="#f7f7f7" stroke-width="0.9"/>
<rect x="874" y="157.3" width="23.5" height="7.6" fill="#cdcdcd"/>
<rect x="874" y="157" width="23.5" height="1" fill="#a8a8a8"/><rect x="874" y="164" width="23.5" height="1" fill="#a8a8a8"/>
<path d="M884 164.9 A5.5 5.5 0 0 1 895 164.9 Z" fill="#e6e6e6"/>
<path d="M885 167.5 H894.8 M889.9 162.5 V172.5" stroke="#444" stroke-width="2.3"/>
<path d="M909.22 162.33 A7.9 7.9 0 1 0 918.28 162.33" fill="none" stroke="#444" stroke-width="2.5"/>
<rect x="912.1" y="158" width="3.4" height="8.7" fill="#444"/>
</g>
<g transform="translate(516,244)">
<rect x="0.5" y="0.5" width="18.5" height="23" fill="#fff"/>
<g clip-path="url(#tclip)" fill="none" stroke="#8c8c8c" stroke-width="1.1">
<circle cx="0" cy="12" r="2.8" fill="#8c8c8c"/><circle cx="0" cy="12" r="6.2"/><circle cx="0" cy="12" r="9.6"/><circle cx="0" cy="12" r="13"/><circle cx="-1" cy="13" r="16.6"/><circle cx="-3" cy="16" r="21.2"/>
</g>
<rect x="0.5" y="0.5" width="18.5" height="23" fill="none" stroke="#7a7a7a" stroke-width="1"/>
<circle cx="17.5" cy="7.5" r="5" fill="#fff"/>
<path d="M14 7.5 H21 M17.5 4 V11" stroke="#444" stroke-width="1.8"/>
</g>
<g transform="translate(0,87)">
<rect x="816" y="160.9" width="18" height="2.9" fill="#444"/><rect x="816" y="167" width="18" height="2.9" fill="#444"/><rect x="816" y="173" width="18" height="2.9" fill="#444"/>
<path d="M846 175.8 L847.9 170.3 L852.3 174.3 Z" fill="#444"/>
<path d="M848.7 169.5 L859.5 158.7 L863.8 162.9 L853 173.7 Z" fill="#444"/>
<path d="M858.2 160 L849.6 168.6" stroke="#f7f7f7" stroke-width="0"/>
<path d="M857 161.3 L861.2 165.5" stroke="#f7f7f7" stroke-width="1"/>
<path d="M849.3 170.5 L852.3 173.5" stroke="#f7f7f7" stroke-width="0.9"/>
<rect x="874" y="157.3" width="23.5" height="7.6" fill="#cdcdcd"/>
<rect x="874" y="157" width="23.5" height="1" fill="#a8a8a8"/><rect x="874" y="164" width="23.5" height="1" fill="#a8a8a8"/>
<path d="M884 164.9 A5.5 5.5 0 0 1 895 164.9 Z" fill="#e6e6e6"/>
<path d="M885 167.5 H894.8 M889.9 162.5 V172.5" stroke="#444" stroke-width="2.3"/>
<path d="M909.22 162.33 A7.9 7.9 0 1 0 918.28 162.33" fill="none" stroke="#444" stroke-width="2.5"/>
<rect x="912.1" y="158" width="3.4" height="8.7" fill="#444"/>
</g>
<g transform="translate(516,273)">
<rect x="0.5" y="0.5" width="18.5" height="23" fill="#fff"/>
<g clip-path="url(#tclip)" fill="none" stroke="#8c8c8c" stroke-width="1.1">
<circle cx="0" cy="12" r="2.8" fill="#8c8c8c"/><circle cx="0" cy="12" r="6.2"/><circle cx="0" cy="12" r="9.6"/><circle cx="0" cy="12" r="13"/><circle cx="-1" cy="13" r="16.6"/><circle cx="-3" cy="16" r="21.2"/>
</g>
<rect x="0.5" y="0.5" width="18.5" height="23" fill="none" stroke="#7a7a7a" stroke-width="1"/>
<circle cx="17.5" cy="7.5" r="5" fill="#fff"/>
<path d="M14 7.5 H21 M17.5 4 V11" stroke="#444" stroke-width="1.8"/>
</g>
<g transform="translate(0,116)">
<rect x="816" y="160.9" width="18" height="2.9" fill="#444"/><rect x="816" y="167" width="18" height="2.9" fill="#444"/><rect x="816" y="173" width="18" height="2.9" fill="#444"/>
<path d="M846 175.8 L847.9 170.3 L852.3 174.3 Z" fill="#444"/>
<path d="M848.7 169.5 L859.5 158.7 L863.8 162.9 L853 173.7 Z" fill="#444"/>
<path d="M858.2 160 L849.6 168.6" stroke="#f7f7f7" stroke-width="0"/>
<path d="M857 161.3 L861.2 165.5" stroke="#f7f7f7" stroke-width="1"/>
<path d="M849.3 170.5 L852.3 173.5" stroke="#f7f7f7" stroke-width="0.9"/>
<rect x="874" y="157.3" width="23.5" height="7.6" fill="#cdcdcd"/>
<rect x="874" y="157" width="23.5" height="1" fill="#a8a8a8"/><rect x="874" y="164" width="23.5" height="1" fill="#a8a8a8"/>
<path d="M884 164.9 A5.5 5.5 0 0 1 895 164.9 Z" fill="#e6e6e6"/>
<path d="M885 167.5 H894.8 M889.9 162.5 V172.5" stroke="#444" stroke-width="2.3"/>
<path d="M909.22 162.33 A7.9 7.9 0 1 0 918.28 162.33" fill="none" stroke="#444" stroke-width="2.5"/>
<rect x="912.1" y="158" width="3.4" height="8.7" fill="#444"/>
</g>
<g transform="translate(516,302)">
<rect x="0.5" y="0.5" width="18.5" height="23" fill="#fff"/>
<g clip-path="url(#tclip)" fill="none" stroke="#8c8c8c" stroke-width="1.1">
<circle cx="0" cy="12" r="2.8" fill="#8c8c8c"/><circle cx="0" cy="12" r="6.2"/><circle cx="0" cy="12" r="9.6"/><circle cx="0" cy="12" r="13"/><circle cx="-1" cy="13" r="16.6"/><circle cx="-3" cy="16" r="21.2"/>
</g>
<rect x="0.5" y="0.5" width="18.5" height="23" fill="none" stroke="#7a7a7a" stroke-width="1"/>
<circle cx="17.5" cy="7.5" r="5" fill="#fff"/>
<path d="M14 7.5 H21 M17.5 4 V11" stroke="#444" stroke-width="1.8"/>
</g>
<g transform="translate(0,145)">
<rect x="816" y="160.9" width="18" height="2.9" fill="#444"/><rect x="816" y="167" width="18" height="2.9" fill="#444"/><rect x="816" y="173" width="18" height="2.9" fill="#444"/>
<path d="M846 175.8 L847.9 170.3 L852.3 174.3 Z" fill="#444"/>
<path d="M848.7 169.5 L859.5 158.7 L863.8 162.9 L853 173.7 Z" fill="#444"/>
<path d="M858.2 160 L849.6 168.6" stroke="#f7f7f7" stroke-width="0"/>
<path d="M857 161.3 L861.2 165.5" stroke="#f7f7f7" stroke-width="1"/>
<path d="M849.3 170.5 L852.3 173.5" stroke="#f7f7f7" stroke-width="0.9"/>
<rect x="874" y="157.3" width="23.5" height="7.6" fill="#cdcdcd"/>
<rect x="874" y="157" width="23.5" height="1" fill="#a8a8a8"/><rect x="874" y="164" width="23.5" height="1" fill="#a8a8a8"/>
<path d="M884 164.9 A5.5 5.5 0 0 1 895 164.9 Z" fill="#e6e6e6"/>
<path d="M885 167.5 H894.8 M889.9 162.5 V172.5" stroke="#444" stroke-width="2.3"/>
<path d="M909.22 162.33 A7.9 7.9 0 1 0 918.28 162.33" fill="none" stroke="#444" stroke-width="2.5"/>
<rect x="912.1" y="158" width="3.4" height="8.7" fill="#444"/>
</g>
<g transform="translate(516,331)">
<rect x="0.5" y="0.5" width="18.5" height="23" fill="#fff"/>
<g clip-path="url(#tclip)" fill="none" stroke="#8c8c8c" stroke-width="1.1">
<circle cx="0" cy="12" r="2.8" fill="#8c8c8c"/><circle cx="0" cy="12" r="6.2"/><circle cx="0" cy="12" r="9.6"/><circle cx="0" cy="12" r="13"/><circle cx="-1" cy="13" r="16.6"/><circle cx="-3" cy="16" r="21.2"/>
</g>
<rect x="0.5" y="0.5" width="18.5" height="23" fill="none" stroke="#7a7a7a" stroke-width="1"/>
<circle cx="17.5" cy="7.5" r="5" fill="#fff"/>
<path d="M14 7.5 H21 M17.5 4 V11" stroke="#444" stroke-width="1.8"/>
</g>
<g transform="translate(0,174)">
<rect x="816" y="160.9" width="18" height="2.9" fill="#444"/><rect x="816" y="167" width="18" height="2.9" fill="#444"/><rect x="816" y="173" width="18" height="2.9" fill="#444"/>
<path d="M846 175.8 L847.9 170.3 L852.3 174.3 Z" fill="#444"/>
<path d="M848.7 169.5 L859.5 158.7 L863.8 162.9 L853 173.7 Z" fill="#444"/>
<path d="M858.2 160 L849.6 168.6" stroke="#f7f7f7" stroke-width="0"/>
<path d="M857 161.3 L861.2 165.5" stroke="#f7f7f7" stroke-width="1"/>
<path d="M849.3 170.5 L852.3 173.5" stroke="#f7f7f7" stroke-width="0.9"/>
<rect x="874" y="157.3" width="23.5" height="7.6" fill="#cdcdcd"/>
<rect x="874" y="157" width="23.5" height="1" fill="#a8a8a8"/><rect x="874" y="164" width="23.5" height="1" fill="#a8a8a8"/>
<path d="M884 164.9 A5.5 5.5 0 0 1 895 164.9 Z" fill="#e6e6e6"/>
<path d="M885 167.5 H894.8 M889.9 162.5 V172.5" stroke="#444" stroke-width="2.3"/>
<path d="M909.22 162.33 A7.9 7.9 0 1 0 918.28 162.33" fill="none" stroke="#444" stroke-width="2.5"/>
<rect x="912.1" y="158" width="3.4" height="8.7" fill="#444"/>
</g>
<g transform="translate(516,360)">
<rect x="0.5" y="0.5" width="18.5" height="23" fill="#fff"/>
<g clip-path="url(#tclip)" fill="none" stroke="#8c8c8c" stroke-width="1.1">
<circle cx="0" cy="12" r="2.8" fill="#8c8c8c"/><circle cx="0" cy="12" r="6.2"/><circle cx="0" cy="12" r="9.6"/><circle cx="0" cy="12" r="13"/><circle cx="-1" cy="13" r="16.6"/><circle cx="-3" cy="16" r="21.2"/>
</g>
<rect x="0.5" y="0.5" width="18.5" height="23" fill="none" stroke="#7a7a7a" stroke-width="1"/>
<circle cx="17.5" cy="7.5" r="5" fill="#fff"/>
<path d="M14 7.5 H21 M17.5 4 V11" stroke="#444" stroke-width="1.8"/>
</g>
<g transform="translate(0,203)">
<rect x="816" y="160.9" width="18" height="2.9" fill="#444"/><rect x="816" y="167" width="18" height="2.9" fill="#444"/><rect x="816" y="173" width="18" height="2.9" fill="#444"/>
<path d="M846 175.8 L847.9 170.3 L852.3 174.3 Z" fill="#444"/>
<path d="M848.7 169.5 L859.5 158.7 L863.8 162.9 L853 173.7 Z" fill="#444"/>
<path d="M858.2 160 L849.6 168.6" stroke="#f7f7f7" stroke-width="0"/>
<path d="M857 161.3 L861.2 165.5" stroke="#f7f7f7" stroke-width="1"/>
<path d="M849.3 170.5 L852.3 173.5" stroke="#f7f7f7" stroke-width="0.9"/>
<rect x="874" y="157.3" width="23.5" height="7.6" fill="#cdcdcd"/>
<rect x="874" y="157" width="23.5" height="1" fill="#a8a8a8"/><rect x="874" y="164" width="23.5" height="1" fill="#a8a8a8"/>
<path d="M884 164.9 A5.5 5.5 0 0 1 895 164.9 Z" fill="#e6e6e6"/>
<path d="M885 167.5 H894.8 M889.9 162.5 V172.5" stroke="#444" stroke-width="2.3"/>
<path d="M909.22 162.33 A7.9 7.9 0 1 0 918.28 162.33" fill="none" stroke="#444" stroke-width="2.5"/>
<rect x="912.1" y="158" width="3.4" height="8.7" fill="#444"/>
</g>
<g transform="translate(516,389)">
<rect x="0.5" y="0.5" width="18.5" height="23" fill="#fff"/>
<g clip-path="url(#tclip)" fill="none" stroke="#8c8c8c" stroke-width="1.1">
<circle cx="0" cy="12" r="2.8" fill="#8c8c8c"/><circle cx="0" cy="12" r="6.2"/><circle cx="0" cy="12" r="9.6"/><circle cx="0" cy="12" r="13"/><circle cx="-1" cy="13" r="16.6"/><circle cx="-3" cy="16" r="21.2"/>
</g>
<rect x="0.5" y="0.5" width="18.5" height="23" fill="none" stroke="#7a7a7a" stroke-width="1"/>
<circle cx="17.5" cy="7.5" r="5" fill="#fff"/>
<path d="M14 7.5 H21 M17.5 4 V11" stroke="#444" stroke-width="1.8"/>
</g>
<g transform="translate(0,232)">
<rect x="816" y="160.9" width="18" height="2.9" fill="#444"/><rect x="816" y="167" width="18" height="2.9" fill="#444"/><rect x="816" y="173" width="18" height="2.9" fill="#444"/>
<path d="M846 175.8 L847.9 170.3 L852.3 174.3 Z" fill="#444"/>
<path d="M848.7 169.5 L859.5 158.7 L863.8 162.9 L853 173.7 Z" fill="#444"/>
<path d="M858.2 160 L849.6 168.6" stroke="#f7f7f7" stroke-width="0"/>
<path d="M857 161.3 L861.2 165.5" stroke="#f7f7f7" stroke-width="1"/>
<path d="M849.3 170.5 L852.3 173.5" stroke="#f7f7f7" stroke-width="0.9"/>
<rect x="874" y="157.3" width="23.5" height="7.6" fill="#cdcdcd"/>
<rect x="874" y="157" width="23.5" height="1" fill="#a8a8a8"/><rect x="874" y="164" width="23.5" height="1" fill="#a8a8a8"/>
<path d="M884 164.9 A5.5 5.5 0 0 1 895 164.9 Z" fill="#e6e6e6"/>
<path d="M885 167.5 H894.8 M889.9 162.5 V172.5" stroke="#444" stroke-width="2.3"/>
<path d="M909.22 162.33 A7.9 7.9 0 1 0 918.28 162.33" fill="none" stroke="#444" stroke-width="2.5"/>
<rect x="912.1" y="158" width="3.4" height="8.7" fill="#444"/>
</g>
<g fill="#444">
<rect x="878" y="419.5" width="16" height="2.3" rx="0.8"/>
<path d="M883.5 419.5 L884.5 418 H888 L889 419.5 Z"/>
<path d="M879.2 423 H881 V435.8 H891.4 V423 H893.2 V437.7 H879.2 Z"/>
<rect x="882.4" y="424.8" width="1.8" height="9.5" rx="0.9"/><rect x="885.3" y="424.8" width="1.8" height="9.5" rx="0.9"/><rect x="888.2" y="424.8" width="1.8" height="9.5" rx="0.9"/>
</g></svg>
<div class="t" style="left:106.00px;top:452.70px;font-size:13px;color:#222;">Außen:</div>
<div class="sel" style="left:151px;top:447px;width:269px;"></div>
<div class="t" style="left:156.30px;top:452.75px;font-size:13px;color:#111;letter-spacing:0.874px;">Direkter Übergang zur Außenluft</div>
<div class="arr" style="left:403px;top:454.5px"></div>
<div class="inp" style="left:431px;top:447px;width:50px;background:#fff;border-color:#707070"></div>
<div class="t" style="left:436.00px;top:452.75px;font-size:13px;color:#111;letter-spacing:0.68px;">-5</div>
<div class="t" style="left:484.50px;top:452.70px;font-size:13px;color:#222;">°C</div>
<div class="inp" style="left:510px;top:447px;width:50px;background:#fff;border-color:#707070"></div>
<div class="t" style="left:515.00px;top:452.75px;font-size:13px;color:#111;letter-spacing:0.68px;">80</div>
<div class="t" style="left:564.00px;top:452.70px;font-size:13px;color:#222;">% Luftfeuchtigkeit</div>
<div class="a" style="left:677px;top:447px;width:55px;height:24px;box-sizing:border-box;border:1px solid #9a9a9a;border-radius:2px;background:linear-gradient(#f2f2f2,#dcdcdc);box-shadow:0 1px 1px rgba(0,0,0,0.15)"></div>
<div class="t" style="left:677px;top:451.00px;width:55px;text-align:center;font-size:14px;line-height:14px;color:#222">Rse...</div>
<svg class="a" style="left:0;top:0" width="1918" height="1100" viewBox="0 0 1918 1100"><rect x="332.0" y="672.40" width="1018.0" height="4.58" fill="#fff"/>
<rect x="332.00" y="672.40" width="46.27" height="4.58" fill="#000"/>
<rect x="424.55" y="672.40" width="46.27" height="4.58" fill="#000"/>
<rect x="517.09" y="672.40" width="46.27" height="4.58" fill="#000"/>
<rect x="609.64" y="672.40" width="46.27" height="4.58" fill="#000"/>
<rect x="702.18" y="672.40" width="46.27" height="4.58" fill="#000"/>
<rect x="794.73" y="672.40" width="46.27" height="4.58" fill="#000"/>
<rect x="887.27" y="672.40" width="46.27" height="4.58" fill="#000"/>
<rect x="979.82" y="672.40" width="46.27" height="4.58" fill="#000"/>
<rect x="1072.36" y="672.40" width="46.27" height="4.58" fill="#000"/>
<rect x="1164.91" y="672.40" width="46.27" height="4.58" fill="#000"/>
<rect x="1257.45" y="672.40" width="46.27" height="4.58" fill="#000"/>
<rect x="332.0" y="676.98" width="1018.0" height="3.87" fill="#fff"/>
<rect x="332.00" y="676.98" width="46.27" height="3.87" fill="#000"/>
<rect x="424.55" y="676.98" width="46.27" height="3.87" fill="#000"/>
<rect x="517.09" y="676.98" width="46.27" height="3.87" fill="#000"/>
<rect x="609.64" y="676.98" width="46.27" height="3.87" fill="#000"/>
<rect x="702.18" y="676.98" width="46.27" height="3.87" fill="#000"/>
<rect x="794.73" y="676.98" width="46.27" height="3.87" fill="#000"/>
<rect x="887.27" y="676.98" width="46.27" height="3.87" fill="#000"/>
<rect x="979.82" y="676.98" width="46.27" height="3.87" fill="#000"/>
<rect x="1072.36" y="676.98" width="46.27" height="3.87" fill="#000"/>
<rect x="1164.91" y="676.98" width="46.27" height="3.87" fill="#000"/>
<rect x="1257.45" y="676.98" width="46.27" height="3.87" fill="#000"/>
<path d="M332.0 672.40 H1350.0 M332.0 676.98 H1350.0" stroke="#9a9a9a" stroke-width="0.8" fill="none"/>
<rect x="332.0" y="680.85" width="1018.0" height="81.44" fill="#ffff99"/>
<clipPath id="c680"><rect x="332.0" y="680.85" width="1018.0" height="81.44"/></clipPath>
<path clip-path="url(#c680)" d="M290.75 694.00 A13.74 12.00 0 0 1 318.23 694.00 L304.50 749.30 A13.74 12.60 0 0 0 331.99 749.30 L318.26 694.00 A13.74 12.00 0 0 1 345.74 694.00 L332.01 749.30 A13.74 12.60 0 0 0 359.50 749.30 L345.77 694.00 A13.74 12.00 0 0 1 373.25 694.00 L359.52 749.30 A13.74 12.60 0 0 0 387.00 749.30 L373.28 694.00 A13.74 12.00 0 0 1 400.76 694.00 L387.03 749.30 A13.74 12.60 0 0 0 414.51 749.30 L400.79 694.00 A13.74 12.00 0 0 1 428.27 694.00 L414.54 749.30 A13.74 12.60 0 0 0 442.02 749.30 L428.30 694.00 A13.74 12.00 0 0 1 455.78 694.00 L442.05 749.30 A13.74 12.60 0 0 0 469.53 749.30 L455.81 694.00 A13.74 12.00 0 0 1 483.29 694.00 L469.56 749.30 A13.74 12.60 0 0 0 497.04 749.30 L483.32 694.00 A13.74 12.00 0 0 1 510.80 694.00 L497.07 749.30 A13.74 12.60 0 0 0 524.55 749.30 L510.83 694.00 A13.74 12.00 0 0 1 538.31 694.00 L524.58 749.30 A13.74 12.60 0 0 0 552.06 749.30 L538.34 694.00 A13.74 12.00 0 0 1 565.82 694.00 L552.09 749.30 A13.74 12.60 0 0 0 579.57 749.30 L565.85 694.00 A13.74 12.00 0 0 1 593.33 694.00 L579.60 749.30 A13.74 12.60 0 0 0 607.08 749.30 L593.36 694.00 A13.74 12.00 0 0 1 620.84 694.00 L607.11 749.30 A13.74 12.60 0 0 0 634.59 749.30 L620.87 694.00 A13.74 12.00 0 0 1 648.35 694.00 L634.62 749.30 A13.74 12.60 0 0 0 662.10 749.30 L648.38 694.00 A13.74 12.00 0 0 1 675.86 694.00 L662.13 749.30 A13.74 12.60 0 0 0 689.61 749.30 L675.89 694.00 A13.74 12.00 0 0 1 703.37 694.00 L689.64 749.30 A13.74 12.60 0 0 0 717.12 749.30 L703.40 694.00 A13.74 12.00 0 0 1 730.88 694.00 L717.15 749.30 A13.74 12.60 0 0 0 744.63 749.30 L730.91 694.00 A13.74 12.00 0 0 1 758.39 694.00 L744.66 749.30 A13.74 12.60 0 0 0 772.14 749.30 L758.42 694.00 A13.74 12.00 0 0 1 785.90 694.00 L772.17 749.30 A13.74 12.60 0 0 0 799.65 749.30 L785.93 694.00 A13.74 12.00 0 0 1 813.41 694.00 L799.68 749.30 A13.74 12.60 0 0 0 827.16 749.30 L813.44 694.00 A13.74 12.00 0 0 1 840.92 694.00 L827.19 749.30 A13.74 12.60 0 0 0 854.67 749.30 L840.95 694.00 A13.74 12.00 0 0 1 868.43 694.00 L854.70 749.30 A13.74 12.60 0 0 0 882.18 749.30 L868.46 694.00 A13.74 12.00 0 0 1 895.94 694.00 L882.21 749.30 A13.74 12.60 0 0 0 909.69 749.30 L895.97 694.00 A13.74 12.00 0 0 1 923.45 694.00 L909.72 749.30 A13.74 12.60 0 0 0 937.20 749.30 L923.48 694.00 A13.74 12.00 0 0 1 950.96 694.00 L937.23 749.30 A13.74 12.60 0 0 0 964.71 749.30 L950.99 694.00 A13.74 12.00 0 0 1 978.47 694.00 L964.74 749.30 A13.74 12.60 0 0 0 992.22 749.30 L978.50 694.00 A13.74 12.00 0 0 1 1005.98 694.00 L992.25 749.30 A13.74 12.60 0 0 0 1019.73 749.30 L1006.01 694.00 A13.74 12.00 0 0 1 1033.49 694.00 L1019.76 749.30 A13.74 12.60 0 0 0 1047.24 749.30 L1033.52 694.00 A13.74 12.00 0 0 1 1061.00 694.00 L1047.27 749.30 A13.74 12.60 0 0 0 1074.75 749.30 L1061.03 694.00 A13.74 12.00 0 0 1 1088.51 694.00 L1074.78 749.30 A13.74 12.60 0 0 0 1102.26 749.30 L1088.54 694.00 A13.74 12.00 0 0 1 1116.02 694.00 L1102.29 749.30 A13.74 12.60 0 0 0 1129.77 749.30 L1116.05 694.00 A13.74 12.00 0 0 1 1143.53 694.00 L1129.80 749.30 A13.74 12.60 0 0 0 1157.28 749.30 L1143.56 694.00 A13.74 12.00 0 0 1 1171.04 694.00 L1157.31 749.30 A13.74 12.60 0 0 0 1184.79 749.30 L1171.07 694.00 A13.74 12.00 0 0 1 1198.55 694.00 L1184.82 749.30 A13.74 12.60 0 0 0 1212.30 749.30 L1198.58 694.00 A13.74 12.00 0 0 1 1226.06 694.00 L1212.33 749.30 A13.74 12.60 0 0 0 1239.81 749.30 L1226.09 694.00 A13.74 12.00 0 0 1 1253.57 694.00 L1239.84 749.30 A13.74 12.60 0 0 0 1267.32 749.30 L1253.60 694.00 A13.74 12.00 0 0 1 1281.08 694.00 L1267.35 749.30 A13.74 12.60 0 0 0 1294.83 749.30 L1281.11 694.00 A13.74 12.00 0 0 1 1308.59 694.00 L1294.86 749.30 A13.74 12.60 0 0 0 1322.34 749.30 L1308.62 694.00 A13.74 12.00 0 0 1 1336.10 694.00 L1322.37 749.30 A13.74 12.60 0 0 0 1349.85 749.30 L1336.13 694.00 A13.74 12.00 0 0 1 1363.61 694.00 L1349.88 749.30 A13.74 12.60 0 0 0 1377.36 749.30 L1363.64 694.00 A13.74 12.00 0 0 1 1391.12 694.00 L1377.39 749.30 A13.74 12.60 0 0 0 1404.87 749.30 L1391.15 694.00 A13.74 12.00 0 0 1 1418.63 694.00 L1404.90 749.30 A13.74 12.60 0 0 0 1432.38 749.30 L1418.66 694.00" fill="none" stroke="#3f3f3f" stroke-width="1.05"/>
<rect x="332.0" y="762.29" width="1018.0" height="4.07" fill="#fff"/>
<rect x="332.00" y="762.29" width="46.27" height="4.07" fill="#000"/>
<rect x="424.55" y="762.29" width="46.27" height="4.07" fill="#000"/>
<rect x="517.09" y="762.29" width="46.27" height="4.07" fill="#000"/>
<rect x="609.64" y="762.29" width="46.27" height="4.07" fill="#000"/>
<rect x="702.18" y="762.29" width="46.27" height="4.07" fill="#000"/>
<rect x="794.73" y="762.29" width="46.27" height="4.07" fill="#000"/>
<rect x="887.27" y="762.29" width="46.27" height="4.07" fill="#000"/>
<rect x="979.82" y="762.29" width="46.27" height="4.07" fill="#000"/>
<rect x="1072.36" y="762.29" width="46.27" height="4.07" fill="#000"/>
<rect x="1164.91" y="762.29" width="46.27" height="4.07" fill="#000"/>
<rect x="1257.45" y="762.29" width="46.27" height="4.07" fill="#000"/>
<path d="M332.0 762.29 H1350.0" stroke="#cfcf90" stroke-width="0.6" fill="none"/>
<rect x="332.0" y="766.36" width="1018.0" height="21.38" fill="#d9aa84"/>
<path d="M346.80 766.36 V787.74 M361.77 766.36 V787.74 M376.74 766.36 V787.74 M391.70 766.36 V787.74 M406.67 766.36 V787.74 M421.64 766.36 V787.74 M436.61 766.36 V787.74 M451.58 766.36 V787.74 M466.54 766.36 V787.74 M481.51 766.36 V787.74 M496.48 766.36 V787.74 M511.45 766.36 V787.74 M526.42 766.36 V787.74 M541.38 766.36 V787.74 M556.35 766.36 V787.74 M571.32 766.36 V787.74 M586.29 766.36 V787.74 M601.26 766.36 V787.74 M616.22 766.36 V787.74 M631.19 766.36 V787.74 M646.16 766.36 V787.74 M661.13 766.36 V787.74 M676.10 766.36 V787.74 M691.06 766.36 V787.74 M706.03 766.36 V787.74 M721.00 766.36 V787.74 M735.97 766.36 V787.74 M750.94 766.36 V787.74 M765.90 766.36 V787.74 M780.87 766.36 V787.74 M795.84 766.36 V787.74 M810.81 766.36 V787.74 M825.78 766.36 V787.74 M840.74 766.36 V787.74 M855.71 766.36 V787.74 M870.68 766.36 V787.74 M885.65 766.36 V787.74 M900.62 766.36 V787.74 M915.58 766.36 V787.74 M930.55 766.36 V787.74 M945.52 766.36 V787.74 M960.49 766.36 V787.74 M975.46 766.36 V787.74 M990.42 766.36 V787.74 M1005.39 766.36 V787.74 M1020.36 766.36 V787.74 M1035.33 766.36 V787.74 M1050.30 766.36 V787.74 M1065.26 766.36 V787.74 M1080.23 766.36 V787.74 M1095.20 766.36 V787.74 M1110.17 766.36 V787.74 M1125.14 766.36 V787.74 M1140.10 766.36 V787.74 M1155.07 766.36 V787.74 M1170.04 766.36 V787.74 M1185.01 766.36 V787.74 M1199.98 766.36 V787.74 M1214.94 766.36 V787.74 M1229.91 766.36 V787.74 M1244.88 766.36 V787.74 M1259.85 766.36 V787.74 M1274.82 766.36 V787.74 M1289.78 766.36 V787.74 M1304.75 766.36 V787.74 M1319.72 766.36 V787.74 M1334.69 766.36 V787.74 M1349.66 766.36 V787.74" stroke="#9a7f48" stroke-width="1" fill="none"/>
<path d="M332.0 766.66 H1350.0 M332.0 787.34 H1350.0" stroke="#a08550" stroke-width="0.8" fill="none"/>
<rect x="332.0" y="787.74" width="1018.0" height="223.96" fill="#ffff99"/>
<clipPath id="c787"><rect x="332.0" y="787.74" width="1018.0" height="223.96"/></clipPath>
<path clip-path="url(#c787)" d="M216.28 825.80 A37.40 35.80 0 0 1 291.08 825.80 L255.44 974.20 A37.40 36.60 0 0 0 330.24 974.20 L294.60 825.80 A37.40 35.80 0 0 1 369.40 825.80 L333.76 974.20 A37.40 36.60 0 0 0 408.56 974.20 L372.92 825.80 A37.40 35.80 0 0 1 447.72 825.80 L412.08 974.20 A37.40 36.60 0 0 0 486.88 974.20 L451.24 825.80 A37.40 35.80 0 0 1 526.04 825.80 L490.40 974.20 A37.40 36.60 0 0 0 565.20 974.20 L529.56 825.80 A37.40 35.80 0 0 1 604.36 825.80 L568.72 974.20 A37.40 36.60 0 0 0 643.52 974.20 L607.88 825.80 A37.40 35.80 0 0 1 682.68 825.80 L647.04 974.20 A37.40 36.60 0 0 0 721.84 974.20 L686.20 825.80 A37.40 35.80 0 0 1 761.00 825.80 L725.36 974.20 A37.40 36.60 0 0 0 800.16 974.20 L764.52 825.80 A37.40 35.80 0 0 1 839.32 825.80 L803.68 974.20 A37.40 36.60 0 0 0 878.48 974.20 L842.84 825.80 A37.40 35.80 0 0 1 917.64 825.80 L882.00 974.20 A37.40 36.60 0 0 0 956.80 974.20 L921.16 825.80 A37.40 35.80 0 0 1 995.96 825.80 L960.32 974.20 A37.40 36.60 0 0 0 1035.12 974.20 L999.48 825.80 A37.40 35.80 0 0 1 1074.28 825.80 L1038.64 974.20 A37.40 36.60 0 0 0 1113.44 974.20 L1077.80 825.80 A37.40 35.80 0 0 1 1152.60 825.80 L1116.96 974.20 A37.40 36.60 0 0 0 1191.76 974.20 L1156.12 825.80 A37.40 35.80 0 0 1 1230.92 825.80 L1195.28 974.20 A37.40 36.60 0 0 0 1270.08 974.20 L1234.44 825.80 A37.40 35.80 0 0 1 1309.24 825.80 L1273.60 974.20 A37.40 36.60 0 0 0 1348.40 974.20 L1312.76 825.80 A37.40 35.80 0 0 1 1387.56 825.80 L1351.92 974.20 A37.40 36.60 0 0 0 1426.72 974.20 L1391.08 825.80 A37.40 35.80 0 0 1 1465.88 825.80 L1430.24 974.20 A37.40 36.60 0 0 0 1505.04 974.20 L1469.40 825.80" fill="none" stroke="#3f3f3f" stroke-width="1.05"/>
<rect x="332.0" y="1011.50" width="1018.0" height="2.20" fill="#dedede"/>
<rect x="332.00" y="1011.50" width="46.27" height="2.20" fill="#000"/>
<rect x="424.55" y="1011.50" width="46.27" height="2.20" fill="#000"/>
<rect x="517.09" y="1011.50" width="46.27" height="2.20" fill="#000"/>
<rect x="609.64" y="1011.50" width="46.27" height="2.20" fill="#000"/>
<rect x="702.18" y="1011.50" width="46.27" height="2.20" fill="#000"/>
<rect x="794.73" y="1011.50" width="46.27" height="2.20" fill="#000"/>
<rect x="887.27" y="1011.50" width="46.27" height="2.20" fill="#000"/>
<rect x="979.82" y="1011.50" width="46.27" height="2.20" fill="#000"/>
<rect x="1072.36" y="1011.50" width="46.27" height="2.20" fill="#000"/>
<rect x="1164.91" y="1011.50" width="46.27" height="2.20" fill="#000"/>
<rect x="1257.45" y="1011.50" width="46.27" height="2.20" fill="#000"/>
<rect x="332.0" y="1042.75" width="1018.0" height="12.72" fill="#dcdcdc"/>
<path d="M332.0 1043.50 H1350.0" stroke="#9c9c9c" stroke-width="1.6" fill="none"/>
<path d="M332.0 1054.87 H1350.0" stroke="#3a3a3a" stroke-width="1.3" fill="none"/>
<path d="M663.4 1046.3 h2.2 v2.2 h-2.2 Z M993.1 1045.8 h2.2 v2.2 h-2.2 Z M877.2 1047.8 h2.2 v2.2 h-2.2 Z M395.5 1048.8 h2.2 v2.2 h-2.2 Z M374.8 1048.3 h2.2 v2.2 h-2.2 Z M407.4 1045.9 h2.2 v2.2 h-2.2 Z M764.9 1051.0 h2.2 v2.2 h-2.2 Z M461.8 1046.8 h2.2 v2.2 h-2.2 Z M969.5 1051.9 h2.2 v2.2 h-2.2 Z M918.7 1048.0 h2.2 v2.2 h-2.2 Z M1321.1 1045.6 h2.2 v2.2 h-2.2 Z M1202.3 1047.3 h2.2 v2.2 h-2.2 Z M482.4 1046.1 h2.2 v2.2 h-2.2 Z M647.9 1051.0 h2.2 v2.2 h-2.2 Z M519.2 1049.3 h2.2 v2.2 h-2.2 Z M981.0 1047.9 h2.2 v2.2 h-2.2 Z M889.1 1045.7 h2.2 v2.2 h-2.2 Z M397.1 1046.7 h2.2 v2.2 h-2.2 Z M1022.8 1048.2 h2.2 v2.2 h-2.2 Z M653.7 1049.3 h2.2 v2.2 h-2.2 Z M793.8 1047.3 h2.2 v2.2 h-2.2 Z M1137.7 1050.1 h2.2 v2.2 h-2.2 Z M583.0 1049.3 h2.2 v2.2 h-2.2 Z M866.4 1051.4 h2.2 v2.2 h-2.2 Z M1072.3 1047.3 h2.2 v2.2 h-2.2 Z M1325.0 1046.1 h2.2 v2.2 h-2.2 Z M758.5 1050.5 h2.2 v2.2 h-2.2 Z M490.2 1048.7 h2.2 v2.2 h-2.2 Z M376.5 1049.9 h2.2 v2.2 h-2.2 Z M1107.7 1049.3 h2.2 v2.2 h-2.2 Z M1219.5 1047.4 h2.2 v2.2 h-2.2 Z M1037.9 1049.4 h2.2 v2.2 h-2.2 Z M921.5 1048.4 h2.2 v2.2 h-2.2 Z M1183.7 1051.9 h2.2 v2.2 h-2.2 Z M814.9 1049.9 h2.2 v2.2 h-2.2 Z M398.2 1050.2 h2.2 v2.2 h-2.2 Z M989.3 1052.2 h2.2 v2.2 h-2.2 Z M1165.5 1047.2 h2.2 v2.2 h-2.2 Z M725.9 1049.9 h2.2 v2.2 h-2.2 Z M359.7 1048.5 h2.2 v2.2 h-2.2 Z M506.4 1046.1 h2.2 v2.2 h-2.2 Z M396.4 1050.6 h2.2 v2.2 h-2.2 Z M467.4 1047.0 h2.2 v2.2 h-2.2 Z M731.1 1051.3 h2.2 v2.2 h-2.2 Z M418.2 1048.4 h2.2 v2.2 h-2.2 Z M890.8 1051.4 h2.2 v2.2 h-2.2 Z M1162.8 1051.3 h2.2 v2.2 h-2.2 Z M617.6 1048.2 h2.2 v2.2 h-2.2 Z M698.6 1051.4 h2.2 v2.2 h-2.2 Z M1302.4 1046.3 h2.2 v2.2 h-2.2 Z M514.6 1046.9 h2.2 v2.2 h-2.2 Z M572.2 1048.6 h2.2 v2.2 h-2.2 Z M930.8 1047.1 h2.2 v2.2 h-2.2 Z M341.1 1048.2 h2.2 v2.2 h-2.2 Z M709.2 1049.2 h2.2 v2.2 h-2.2 Z M1297.7 1050.1 h2.2 v2.2 h-2.2 Z M856.6 1049.6 h2.2 v2.2 h-2.2 Z M1018.6 1045.6 h2.2 v2.2 h-2.2 Z M1243.7 1050.7 h2.2 v2.2 h-2.2 Z M1218.5 1050.8 h2.2 v2.2 h-2.2 Z" fill="none" stroke="#a0a0a0" stroke-width="0.7"/>
<path d="M291.6 672.40 V1056.17" stroke="#8a8a8a" stroke-width="1.1" fill="none"/>
<path d="M287 672.40 H297 M287 676.98 H297 M287 680.85 H297 M287 762.29 H297 M287 766.36 H297 M287 787.74 H297 M287 1011.70 H297 M287 1012.21 H297 M287 1042.75 H297 M287 1055.47 H297" stroke="#707070" stroke-width="1" fill="none"/>
<text x="297.3" y="727.0" font-family="Liberation Sans" font-size="14" fill="#8a8a8a">80</text>
<text x="297.3" y="783.0" font-family="Liberation Sans" font-size="14" fill="#8a8a8a">21</text>
<text x="297.3" y="905.0" font-family="Liberation Sans" font-size="14" fill="#8a8a8a">220</text>
<text x="297.3" y="1033.0" font-family="Liberation Sans" font-size="14" fill="#8a8a8a">30</text>
<text x="297.3" y="1055.3" font-family="Liberation Sans" font-size="14" fill="#8a8a8a">12,5</text>
<text transform="translate(285.3 864.5) rotate(-90)" text-anchor="middle" font-family="Liberation Sans" font-size="14" fill="#8a8a8a">376,3</text>
<text x="841" y="666" text-anchor="middle" font-family="Liberation Sans" font-size="14" fill="#8a8a8a">Außen</text>
<text x="841" y="1072.8" text-anchor="middle" font-family="Liberation Sans" font-size="14" fill="#8a8a8a">Innen</text>
<text x="1350" y="1073" text-anchor="end" font-family="Liberation Sans" font-size="14" fill="#c8c8c8">ubakus.de</text>
<circle cx="881.1" cy="675.0" r="9.6" fill="#fff" stroke="#505050" stroke-width="1"/>
<text x="881.1" y="679.7" text-anchor="middle" font-family="Liberation Sans" font-size="13" fill="#222">9</text>
<circle cx="861.1" cy="678.9" r="9.6" fill="#fff" stroke="#505050" stroke-width="1"/>
<text x="861.1" y="683.6" text-anchor="middle" font-family="Liberation Sans" font-size="13" fill="#222">8</text>
<circle cx="861.0" cy="721.7" r="9.6" fill="#fff" stroke="#505050" stroke-width="1"/>
<text x="861.0" y="726.4" text-anchor="middle" font-family="Liberation Sans" font-size="13" fill="#222">7</text>
<circle cx="861.0" cy="764.4" r="9.6" fill="#fff" stroke="#505050" stroke-width="1"/>
<text x="861.0" y="769.1" text-anchor="middle" font-family="Liberation Sans" font-size="13" fill="#222">6</text>
<circle cx="841.1" cy="777.2" r="9.6" fill="#fff" stroke="#505050" stroke-width="1"/>
<text x="841.1" y="781.9" text-anchor="middle" font-family="Liberation Sans" font-size="13" fill="#222">5</text>
<circle cx="841.2" cy="900.2" r="9.6" fill="#fff" stroke="#505050" stroke-width="1"/>
<text x="841.2" y="904.9" text-anchor="middle" font-family="Liberation Sans" font-size="13" fill="#222">4</text>
<circle cx="841.2" cy="1012.5" r="9.6" fill="#fff" stroke="#505050" stroke-width="1"/>
<text x="841.2" y="1017.2" text-anchor="middle" font-family="Liberation Sans" font-size="13" fill="#222">3</text>
<circle cx="820.75" cy="1027.8" r="9.6" fill="#fff" stroke="#505050" stroke-width="1"/>
<text x="820.75" y="1032.5" text-anchor="middle" font-family="Liberation Sans" font-size="13" fill="#222">2</text>
<circle cx="820.75" cy="1049.7" r="9.6" fill="#fff" stroke="#505050" stroke-width="1"/>
<text x="820.75" y="1054.4" text-anchor="middle" font-family="Liberation Sans" font-size="13" fill="#222">1</text>
<circle cx="1344.3" cy="675.0" r="1.9" fill="#444"/>
<path d="M1344.3 675.0 H1370 L1395.2 665.4" fill="none" stroke="#555" stroke-width="1.2"/>
<text x="1400.7" y="670.4" font-family="Liberation Sans" font-size="14" fill="#555">Polar-Top (4,5mm)</text>
<circle cx="1344.3" cy="679.3" r="1.9" fill="#444"/>
<path d="M1344.3 679.3 H1370 L1395.2 688.9" fill="none" stroke="#555" stroke-width="1.2"/>
<text x="1400.7" y="693.9" font-family="Liberation Sans" font-size="14" fill="#555">Polartherm SK Plus (3,8mm)</text>
<circle cx="1344.3" cy="744.2" r="1.9" fill="#444"/>
<path d="M1344.3 744.2 H1370 L1395.2 744.2" fill="none" stroke="#555" stroke-width="1.2"/>
<text x="1400.7" y="749.2" font-family="Liberation Sans" font-size="14" fill="#555">426.008 EPS-Gefälledämmung (im Mittel) (80mm)</text>
<circle cx="1344.3" cy="764.7" r="1.9" fill="#444"/>
<path d="M1344.3 764.7 H1370 L1395.2 768.1" fill="none" stroke="#555" stroke-width="1.2"/>
<text x="1400.7" y="773.1" font-family="Liberation Sans" font-size="14" fill="#555">Icopal Sicotherm</text>
<circle cx="1344.3" cy="782.2" r="1.9" fill="#444"/>
<path d="M1344.3 782.2 H1370 L1395.2 791.8" fill="none" stroke="#555" stroke-width="1.2"/>
<text x="1400.7" y="796.8" font-family="Liberation Sans" font-size="14" fill="#555">OSB-Platte, OSB/3 (21mm)</text>
<circle cx="1344.3" cy="987.7" r="1.9" fill="#444"/>
<path d="M1344.3 987.7 H1370 L1395.2 987.9" fill="none" stroke="#555" stroke-width="1.2"/>
<text x="1400.7" y="992.9" font-family="Liberation Sans" font-size="14" fill="#555">ISOVER Integra ZKF 1-035 (220mm)</text>
<circle cx="1344.3" cy="1012.0" r="1.9" fill="#444"/>
<path d="M1344.3 1012.0 H1370 L1395.2 1012.0" fill="none" stroke="#555" stroke-width="1.2"/>
<text x="1400.7" y="1017.0" font-family="Liberation Sans" font-size="14" fill="#555">Airstop 1500 Dampfsperrre (0,5mm)</text>
<circle cx="1344.3" cy="1035.6" r="1.9" fill="#444"/>
<path d="M1344.3 1035.6 H1370 L1395.2 1035.6" fill="none" stroke="#555" stroke-width="1.2"/>
<text x="1400.7" y="1040.6" font-family="Liberation Sans" font-size="14" fill="#555">Installationsebene (30mm)</text>
<circle cx="1344.3" cy="1049.6" r="1.9" fill="#444"/>
<path d="M1344.3 1049.6 H1370 L1395.2 1060.0" fill="none" stroke="#555" stroke-width="1.2"/>
<text x="1400.7" y="1065.0" font-family="Liberation Sans" font-size="14" fill="#555">Rigips Die Weiße RB (12,5mm)</text>
<path d="M1724.5 738.5 A6.2 6.2 0 1 0 1733 738.5" fill="none" stroke="#666" stroke-width="1.6"/><path d="M1728.75 735.5 V743" stroke="#666" stroke-width="1.8"/></svg>
<div class="t" style="left:804.00px;top:1265.10px;font-size:13px;color:#851420;">Gewerbliche Nutzung nur mit kostenpflichtigem Zugang. </div>
<div class="t" style="left:1130.60px;top:1265.10px;font-size:13px;color:#5a8a36;">Weitere Infos</div>
<div class="a" style="left:0;top:1287px;width:1918px;height:1px;background:#111"></div>
<div class="a" style="left:0;top:1288px;width:1918px;height:148px;background:linear-gradient(#565656,#434343)"></div>
<div class="a" style="left:0;top:1436px;width:1918px;height:3px;background:#080808"></div>
<div class="a" style="left:10.5px;top:1302px;width:0;height:0;border-left:6.3px solid transparent;border-right:6.3px solid transparent;border-top:10.5px solid #eee"></div>
<div class="t" style="left:466.30px;top:1301.29px;font-size:20.8px;color:#f2f2f2;">U-Wert:</div>
<div class="t" style="left:543.90px;top:1297.91px;font-size:24.8px;color:#f2f2f2;">0,109</div>
<div class="t" style="left:613.00px;top:1307.15px;font-size:14px;color:#f2f2f2;">W/(m²K)</div>
<svg class="a" style="left:678px;top:1303px" width="18" height="18" viewBox="0 0 18 18"><path d="M2.2 3.2 A4.2 4.2 0 0 0 7.5 8.2 L14.2 14.8 A1.6 1.6 0 0 0 16.4 12.6 L9.8 5.9 A4.2 4.2 0 0 0 4.8 0.8 L7 3.2 L6.2 5.6 L4 6.1 Z" fill="#b4b4b4"/></svg>
<div class="a" style="left:466px;top:1331px;width:232px;height:12px;box-sizing:border-box;border-top:1px solid #3a3a3a;border-left:1px solid #3a3a3a;border-bottom:1px solid #7c7c7c;border-right:1px solid #7c7c7c"></div>
<div class="a" style="left:467px;top:1332px;width:25px;height:10px;background:#8ccb5a;box-shadow:inset 0 1px 0 rgba(255,255,255,0.3)"></div>
<div class="a" style="left:466px;top:1343px;width:232px;height:4px;box-sizing:border-box;border-top:1px solid #3a3a3a;border-left:1px solid #3a3a3a;border-bottom:1px solid #7c7c7c;border-right:1px solid #7c7c7c;background:linear-gradient(90deg,#78a55a 0%,#78a55a 20.5%,#a21d1d 21%,#a21d1d 100%)"></div>
<div class="t" style="left:466.30px;top:1352.80px;font-size:13px;color:#f2f2f2;">EnEV Bestand U ≤ 0.2</div>
<div class="a" style="left:601.5px;top:1350.3px;width:15.2px;height:15.2px;box-sizing:border-box;border:1px solid #707070;background:#cdcdcd"></div>
<div class="a" style="left:605px;top:1355px;width:0;height:0;border-left:4px solid transparent;border-right:4px solid transparent;border-top:7.5px solid #444"></div>
<div class="t" style="left:466.30px;top:1380.00px;font-size:13px;color:#f2f2f2;">Beitrag zum Treibhauseffekt:</div>
<div class="a" style="left:466px;top:1396px;width:232px;height:8px;box-sizing:border-box;border-top:1px solid #3a3a3a;border-left:1px solid #3a3a3a;border-bottom:1px solid #7c7c7c;border-right:1px solid #7c7c7c"></div>
<div class="a" style="left:467px;top:1397px;width:98px;height:6px;background:#8ccb5a;box-shadow:inset 0 1px 0 rgba(255,255,255,0.3)"></div>
<div class="a" style="left:466px;top:1404px;width:232px;height:4px;box-sizing:border-box;border-top:1px solid #3a3a3a;border-left:1px solid #3a3a3a;border-bottom:1px solid #7c7c7c;border-right:1px solid #7c7c7c;background:linear-gradient(90deg,#78a55a 0%,#78a55a 50%,#c9a31c 80%,#a21d1d 100%)"></div>
<div class="t" style="left:466.30px;top:1415.84px;font-size:12px;color:#b8b8b8;">sehr gut</div>
<div class="t" style="left:698.00px;top:1415.84px;font-size:12px;color:#b8b8b8;transform:translateX(-100%);">mangelhaft</div>
<div class="t" style="left:718.50px;top:1299.80px;font-size:13px;color:#f2f2f2;">Tauwasser: 0 kg/m²</div>
<div class="a" style="left:718px;top:1316px;width:232px;height:8px;box-sizing:border-box;border-top:1px solid #3a3a3a;border-left:1px solid #3a3a3a;border-bottom:1px solid #7c7c7c;border-right:1px solid #7c7c7c"></div>
<div class="a" style="left:719px;top:1317px;width:2px;height:6px;background:#8ccb5a;box-shadow:inset 0 1px 0 rgba(255,255,255,0.3)"></div>
<div class="a" style="left:718px;top:1324px;width:232px;height:4px;box-sizing:border-box;border-top:1px solid #3a3a3a;border-left:1px solid #3a3a3a;border-bottom:1px solid #7c7c7c;border-right:1px solid #7c7c7c;background:linear-gradient(90deg,#78a55a 0%,#78a55a 42%,#c9a31c 70%,#a21d1d 100%)"></div>
<div class="t" style="left:718.50px;top:1339.80px;font-size:13px;color:#f2f2f2;">Holzfeuchte: +0,0 %</div>
<div class="a" style="left:718px;top:1356px;width:232px;height:8px;box-sizing:border-box;border-top:1px solid #3a3a3a;border-left:1px solid #3a3a3a;border-bottom:1px solid #7c7c7c;border-right:1px solid #7c7c7c"></div>
<div class="a" style="left:719px;top:1357px;width:2px;height:6px;background:#8ccb5a;box-shadow:inset 0 1px 0 rgba(255,255,255,0.3)"></div>
<div class="a" style="left:718px;top:1364px;width:232px;height:4px;box-sizing:border-box;border-top:1px solid #3a3a3a;border-left:1px solid #3a3a3a;border-bottom:1px solid #7c7c7c;border-right:1px solid #7c7c7c;background:linear-gradient(90deg,#78a55a 0%,#78a55a 18%,#c9a31c 30%,#a21d1d 52%,#a21d1d 100%)"></div>
<div class="t" style="left:718.50px;top:1380.00px;font-size:13px;color:#f2f2f2;">Trocknungsdauer: 4 Tage</div>
<div class="a" style="left:718px;top:1396px;width:232px;height:8px;box-sizing:border-box;border-top:1px solid #3a3a3a;border-left:1px solid #3a3a3a;border-bottom:1px solid #7c7c7c;border-right:1px solid #7c7c7c"></div>
<div class="a" style="left:719px;top:1397px;width:9px;height:6px;background:#8ccb5a;box-shadow:inset 0 1px 0 rgba(255,255,255,0.3)"></div>
<div class="a" style="left:718px;top:1404px;width:232px;height:4px;box-sizing:border-box;border-top:1px solid #3a3a3a;border-left:1px solid #3a3a3a;border-bottom:1px solid #7c7c7c;border-right:1px solid #7c7c7c;background:linear-gradient(90deg,#78a55a 0%,#78a55a 35%,#c9a31c 60%,#a21d1d 95%,#a21d1d 100%)"></div>
<div class="t" style="left:718.50px;top:1415.84px;font-size:12px;color:#b8b8b8;">sehr gut</div>
<div class="t" style="left:950.00px;top:1415.84px;font-size:12px;color:#b8b8b8;transform:translateX(-100%);">mangelhaft</div>
<div class="t" style="left:970.30px;top:1300.00px;font-size:13px;color:#f2f2f2;">sd-Wert: 2441 m</div>
<div class="t" style="left:1202.00px;top:1300.00px;font-size:13px;color:#f2f2f2;transform:translateX(-100%);">Dicke: 37,63 cm</div>
<div class="t" style="left:1202.00px;top:1318.00px;font-size:13px;color:#f2f2f2;transform:translateX(-100%);">Gewicht: >38 kg/m²</div>
<div class="t" style="left:970.30px;top:1338.50px;font-size:13px;color:#f2f2f2;">Oberfläche innen: 19,3°C (52%)</div>
<div class="a" style="left:970px;top:1355px;width:232px;height:8px;box-sizing:border-box;border-top:1px solid #3a3a3a;border-left:1px solid #3a3a3a;border-bottom:1px solid #7c7c7c;border-right:1px solid #7c7c7c"></div>
<div class="a" style="left:971px;top:1356px;width:110px;height:6px;background:#8ccb5a;box-shadow:inset 0 1px 0 rgba(255,255,255,0.3)"></div>
<div class="a" style="left:970px;top:1363px;width:232px;height:4px;box-sizing:border-box;border-top:1px solid #3a3a3a;border-left:1px solid #3a3a3a;border-bottom:1px solid #7c7c7c;border-right:1px solid #7c7c7c;background:linear-gradient(90deg,#a21d1d 0%,#a21d1d 14%,#c9a31c 26%,#78a55a 40%,#78a55a 100%)"></div>
<div class="t" style="left:970.30px;top:1377.80px;font-size:13px;color:#f2f2f2;">Trocknungsreserve: 4 g//m²a</div>
<div class="a" style="left:970px;top:1395px;width:232px;height:8px;box-sizing:border-box;border-top:1px solid #3a3a3a;border-left:1px solid #3a3a3a;border-bottom:1px solid #7c7c7c;border-right:1px solid #7c7c7c"></div>
<div class="a" style="left:971px;top:1396px;width:5px;height:6px;background:#cc0000;box-shadow:inset 0 1px 0 rgba(255,255,255,0.3)"></div>
<div class="a" style="left:970px;top:1403px;width:232px;height:4px;box-sizing:border-box;border-top:1px solid #3a3a3a;border-left:1px solid #3a3a3a;border-bottom:1px solid #7c7c7c;border-right:1px solid #7c7c7c;background:linear-gradient(90deg,#a21d1d 0%,#a21d1d 44%,#c9a31c 52%,#78a55a 60%,#78a55a 100%)"></div>
<div class="t" style="left:970.30px;top:1413.34px;font-size:12px;color:#b8b8b8;">mangelhaft</div>
<div class="t" style="left:1202.00px;top:1413.34px;font-size:12px;color:#b8b8b8;transform:translateX(-100%);">sehr gut</div>
<div class="t" style="left:1222.50px;top:1300.00px;font-size:13px;color:#f2f2f2;">Temp.Ampl.Dämpfung (1/TAV): 17,5</div>
<div class="a" style="left:1222px;top:1316px;width:232px;height:8px;box-sizing:border-box;border-top:1px solid #3a3a3a;border-left:1px solid #3a3a3a;border-bottom:1px solid #7c7c7c;border-right:1px solid #7c7c7c"></div>
<div class="a" style="left:1223px;top:1317px;width:201px;height:6px;background:#8ccb5a;box-shadow:inset 0 1px 0 rgba(255,255,255,0.3)"></div>
<div class="a" style="left:1222px;top:1324px;width:232px;height:4px;box-sizing:border-box;border-top:1px solid #3a3a3a;border-left:1px solid #3a3a3a;border-bottom:1px solid #7c7c7c;border-right:1px solid #7c7c7c;background:linear-gradient(90deg,#a21d1d 0%,#c9a31c 16%,#78a55a 36%,#78a55a 100%)"></div>
<div class="t" style="left:1222.50px;top:1339.80px;font-size:13px;color:#f2f2f2;">Phasenverschiebung: 12 h</div>
<div class="a" style="left:1222px;top:1356px;width:232px;height:8px;box-sizing:border-box;border-top:1px solid #3a3a3a;border-left:1px solid #3a3a3a;border-bottom:1px solid #7c7c7c;border-right:1px solid #7c7c7c"></div>
<div class="a" style="left:1223px;top:1357px;width:147px;height:6px;background:#8ccb5a;box-shadow:inset 0 1px 0 rgba(255,255,255,0.3)"></div>
<div class="a" style="left:1222px;top:1364px;width:232px;height:4px;box-sizing:border-box;border-top:1px solid #3a3a3a;border-left:1px solid #3a3a3a;border-bottom:1px solid #7c7c7c;border-right:1px solid #7c7c7c;background:linear-gradient(90deg,#a21d1d 0%,#c9a31c 18%,#78a55a 40%,#78a55a 100%)"></div>
<div class="t" style="left:1222.50px;top:1380.00px;font-size:13px;color:#f2f2f2;">Speicherfähigkeit innen: 15.7 kJ/m²K</div>
<div class="a" style="left:1222px;top:1396px;width:232px;height:8px;box-sizing:border-box;border-top:1px solid #3a3a3a;border-left:1px solid #3a3a3a;border-bottom:1px solid #7c7c7c;border-right:1px solid #7c7c7c"></div>
<div class="a" style="left:1223px;top:1397px;width:36px;height:6px;background:#de8410;box-shadow:inset 0 1px 0 rgba(255,255,255,0.3)"></div>
<div class="a" style="left:1222px;top:1404px;width:232px;height:4px;box-sizing:border-box;border-top:1px solid #3a3a3a;border-left:1px solid #3a3a3a;border-bottom:1px solid #7c7c7c;border-right:1px solid #7c7c7c;background:linear-gradient(90deg,#a21d1d 0%,#c9a31c 20%,#78a55a 40%,#78a55a 100%)"></div>
<div class="t" style="left:1222.50px;top:1415.84px;font-size:12px;color:#b8b8b8;">mangelhaft</div>
<div class="t" style="left:1454.00px;top:1415.84px;font-size:12px;color:#b8b8b8;transform:translateX(-100%);">sehr gut</div>
<div class="a" style="left:0;top:0;width:1px;height:45px;background:#686a86"></div>
<div class="a" style="left:0;top:45px;width:1px;height:1394px;background:#7a7a7a"></div>
</body></html>
